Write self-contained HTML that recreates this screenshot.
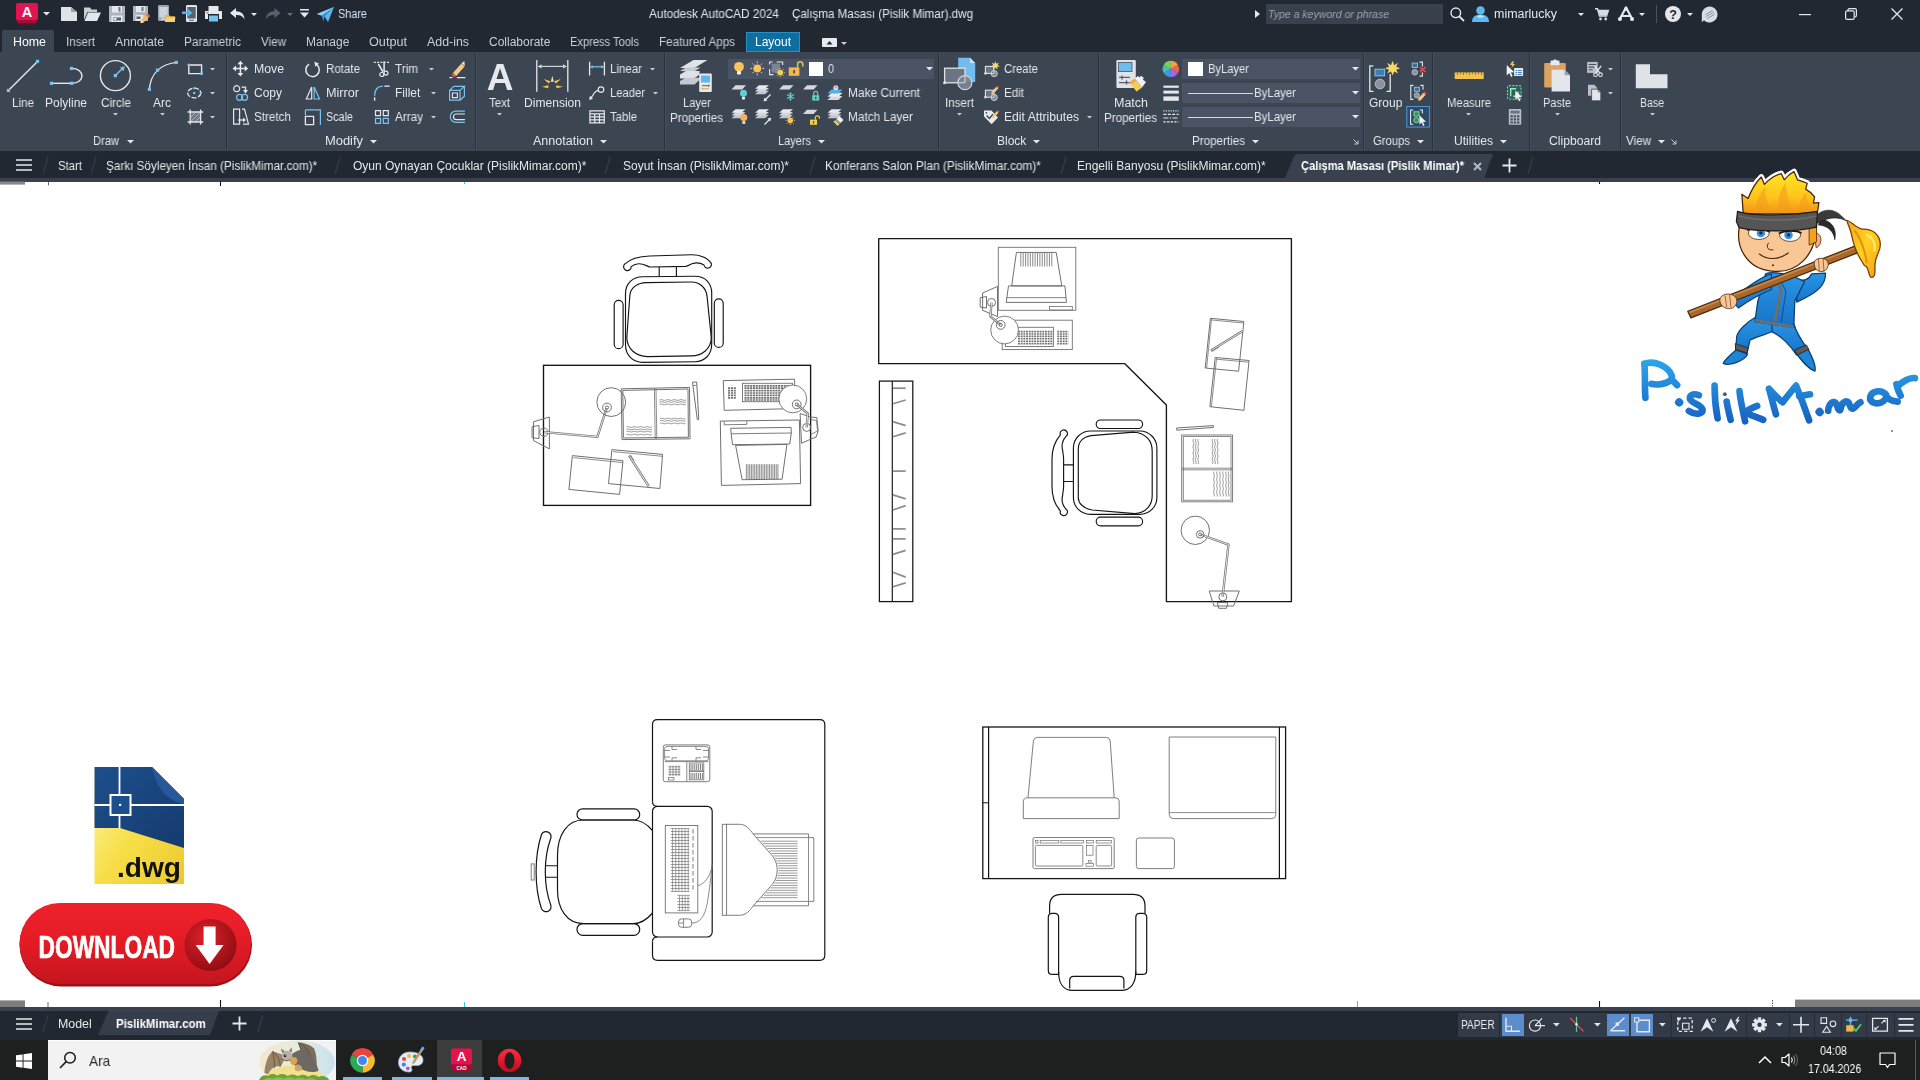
<!DOCTYPE html>
<html><head><meta charset="utf-8"><title>AutoCAD</title>
<style>
html,body{margin:0;padding:0;width:1920px;height:1080px;overflow:hidden;background:#fff;font-family:"Liberation Sans",sans-serif;}
.abs{position:absolute}
.t{position:absolute;white-space:nowrap;transform-origin:0 50%;will-change:transform;}
.i{position:absolute;overflow:visible}
</style></head><body>
<div class="abs" style="left:0;top:0;width:1920px;height:52px;background:#222832"></div>
<div class="abs" style="left:0;top:52px;width:1920px;height:99px;background:#3c4552"></div>
<div class="abs" style="left:0;top:151px;width:1920px;height:27px;background:#222832"></div>
<div class="abs" style="left:0;top:177.5px;width:1920px;height:4px;background:#39414f"></div>
<div class="abs" style="left:2px;top:30px;width:52px;height:23px;background:#3c4552;border-radius:2px 2px 0 0"></div>
<div class="abs" style="left:746px;top:32px;width:54px;height:20px;background:#0d6e9f;border:1px solid #2a8fc4;box-sizing:border-box"></div>
<span class="t" style="left:13.0px;top:34.0px;font-size:12px;line-height:16px;color:#ffffff;transform:scaleX(1.031);">Home</span>
<span class="t" style="left:66.0px;top:34.0px;font-size:12px;line-height:16px;color:#c9ced6;transform:scaleX(0.966);">Insert</span>
<span class="t" style="left:115.0px;top:34.0px;font-size:12px;line-height:16px;color:#c9ced6;transform:scaleX(1.020);">Annotate</span>
<span class="t" style="left:184.0px;top:34.0px;font-size:12px;line-height:16px;color:#c9ced6;transform:scaleX(0.983);">Parametric</span>
<span class="t" style="left:261.0px;top:34.0px;font-size:12px;line-height:16px;color:#c9ced6;transform:scaleX(0.969);">View</span>
<span class="t" style="left:306.0px;top:34.0px;font-size:12px;line-height:16px;color:#c9ced6;transform:scaleX(0.992);">Manage</span>
<span class="t" style="left:369.0px;top:34.0px;font-size:12px;line-height:16px;color:#c9ced6;transform:scaleX(1.055);">Output</span>
<span class="t" style="left:427.0px;top:34.0px;font-size:12px;line-height:16px;color:#c9ced6;transform:scaleX(1.032);">Add-ins</span>
<span class="t" style="left:489.0px;top:34.0px;font-size:12px;line-height:16px;color:#c9ced6;transform:scaleX(0.994);">Collaborate</span>
<span class="t" style="left:570.0px;top:34.0px;font-size:12px;line-height:16px;color:#c9ced6;transform:scaleX(0.926);">Express Tools</span>
<span class="t" style="left:659.0px;top:34.0px;font-size:12px;line-height:16px;color:#c9ced6;transform:scaleX(0.974);">Featured Apps</span>
<span class="t" style="left:755.0px;top:34.0px;font-size:12px;line-height:16px;color:#ffffff;">Layout</span>
<svg class="i" style="left:822px;top:38px" width="15" height="9" viewBox="0 0 15 9" ><rect x="0" y="0" width="15" height="9" rx="1" fill="#e8eaee"/><path d="M4.5 6.5L7.5 3L10.5 6.5Z" fill="#222832"/></svg>
<svg class="i" style="left:840.5px;top:41.5px" width="6" height="3" viewBox="0 0 6 3"><path d="M0 0H6L3 3Z" fill="#c9ced6"/></svg>
<span class="t" style="left:649.0px;top:6.0px;font-size:12px;line-height:16px;color:#e4e7ec;transform:scaleX(0.979);">Autodesk AutoCAD 2024</span>
<span class="t" style="left:792.0px;top:6.0px;font-size:12px;line-height:16px;color:#e4e7ec;transform:scaleX(0.966);">Çalışma Masası (Pislik Mimar).dwg</span>
<span class="t" style="left:338.0px;top:6.0px;font-size:12px;line-height:16px;color:#cfe3f5;transform:scaleX(0.906);">Share</span>
<div class="abs" style="left:1265.5px;top:4px;width:177.5px;height:20px;background:#39414f"></div>
<span class="t" style="left:1268.0px;top:6.5px;font-size:11px;line-height:15px;color:#9aa3b0;font-style:italic;transform:scaleX(0.958);">Type a keyword or phrase</span>
<span class="t" style="left:1494.0px;top:6.0px;font-size:12px;line-height:16px;color:#e4e7ec;transform:scaleX(1.038);">mimarlucky</span>
<div class="abs" style="left:1656px;top:5px;width:1px;height:18px;background:#4a5261"></div>
<div class="abs" style="left:226px;top:53px;width:1px;height:97px;background:#2b323e"></div>
<div class="abs" style="left:227px;top:53px;width:1px;height:97px;background:#464f5f"></div>
<div class="abs" style="left:475px;top:53px;width:1px;height:97px;background:#2b323e"></div>
<div class="abs" style="left:476px;top:53px;width:1px;height:97px;background:#464f5f"></div>
<div class="abs" style="left:664px;top:53px;width:1px;height:97px;background:#2b323e"></div>
<div class="abs" style="left:665px;top:53px;width:1px;height:97px;background:#464f5f"></div>
<div class="abs" style="left:938px;top:53px;width:1px;height:97px;background:#2b323e"></div>
<div class="abs" style="left:939px;top:53px;width:1px;height:97px;background:#464f5f"></div>
<div class="abs" style="left:1098px;top:53px;width:1px;height:97px;background:#2b323e"></div>
<div class="abs" style="left:1099px;top:53px;width:1px;height:97px;background:#464f5f"></div>
<div class="abs" style="left:1363px;top:53px;width:1px;height:97px;background:#2b323e"></div>
<div class="abs" style="left:1364px;top:53px;width:1px;height:97px;background:#464f5f"></div>
<div class="abs" style="left:1432px;top:53px;width:1px;height:97px;background:#2b323e"></div>
<div class="abs" style="left:1433px;top:53px;width:1px;height:97px;background:#464f5f"></div>
<div class="abs" style="left:1529px;top:53px;width:1px;height:97px;background:#2b323e"></div>
<div class="abs" style="left:1530px;top:53px;width:1px;height:97px;background:#464f5f"></div>
<div class="abs" style="left:1620px;top:53px;width:1px;height:97px;background:#2b323e"></div>
<div class="abs" style="left:1621px;top:53px;width:1px;height:97px;background:#464f5f"></div>
<span class="t" style="left:12.0px;top:95.0px;font-size:12px;line-height:16px;color:#e4e7ec;transform:scaleX(0.970);">Line</span>
<span class="t" style="left:45.0px;top:95.0px;font-size:12px;line-height:16px;color:#e4e7ec;">Polyline</span>
<span class="t" style="left:101.0px;top:95.0px;font-size:12px;line-height:16px;color:#e4e7ec;transform:scaleX(0.978);">Circle</span>
<span class="t" style="left:153.0px;top:95.0px;font-size:12px;line-height:16px;color:#e4e7ec;">Arc</span>
<span class="t" style="left:93.0px;top:133.0px;font-size:12px;line-height:16px;color:#e4e7ec;transform:scaleX(0.929);">Draw</span>
<span class="t" style="left:254.0px;top:61.0px;font-size:12px;line-height:16px;color:#e4e7ec;transform:scaleX(1.022);">Move</span>
<span class="t" style="left:254.0px;top:85.0px;font-size:12px;line-height:16px;color:#e4e7ec;">Copy</span>
<span class="t" style="left:254.0px;top:109.0px;font-size:12px;line-height:16px;color:#e4e7ec;transform:scaleX(0.973);">Stretch</span>
<span class="t" style="left:326.0px;top:61.0px;font-size:12px;line-height:16px;color:#e4e7ec;transform:scaleX(0.962);">Rotate</span>
<span class="t" style="left:326.0px;top:85.0px;font-size:12px;line-height:16px;color:#e4e7ec;transform:scaleX(1.054);">Mirror</span>
<span class="t" style="left:326.0px;top:109.0px;font-size:12px;line-height:16px;color:#e4e7ec;transform:scaleX(0.899);">Scale</span>
<span class="t" style="left:395.0px;top:61.0px;font-size:12px;line-height:16px;color:#e4e7ec;transform:scaleX(0.977);">Trim</span>
<span class="t" style="left:395.0px;top:85.0px;font-size:12px;line-height:16px;color:#e4e7ec;transform:scaleX(0.987);">Fillet</span>
<span class="t" style="left:395.0px;top:109.0px;font-size:12px;line-height:16px;color:#e4e7ec;transform:scaleX(0.977);">Array</span>
<span class="t" style="left:325.0px;top:133.0px;font-size:12px;line-height:16px;color:#e4e7ec;transform:scaleX(1.075);">Modify</span>
<span class="t" style="left:489.0px;top:95.0px;font-size:12px;line-height:16px;color:#e4e7ec;transform:scaleX(0.954);">Text</span>
<span class="t" style="left:524.0px;top:95.0px;font-size:12px;line-height:16px;color:#e4e7ec;transform:scaleX(1.006);">Dimension</span>
<span class="t" style="left:610.0px;top:61.0px;font-size:12px;line-height:16px;color:#e4e7ec;transform:scaleX(0.959);">Linear</span>
<span class="t" style="left:610.0px;top:85.0px;font-size:12px;line-height:16px;color:#e4e7ec;transform:scaleX(0.937);">Leader</span>
<span class="t" style="left:610.0px;top:109.0px;font-size:12px;line-height:16px;color:#e4e7ec;transform:scaleX(0.941);">Table</span>
<span class="t" style="left:533.0px;top:133.0px;font-size:12px;line-height:16px;color:#e4e7ec;transform:scaleX(1.046);">Annotation</span>
<span class="t" style="left:683.0px;top:95.0px;font-size:12px;line-height:16px;color:#e4e7ec;transform:scaleX(0.933);">Layer</span>
<span class="t" style="left:670.0px;top:110.0px;font-size:12px;line-height:16px;color:#e4e7ec;transform:scaleX(0.969);">Properties</span>
<span class="t" style="left:848.0px;top:85.0px;font-size:12px;line-height:16px;color:#e4e7ec;transform:scaleX(0.991);">Make Current</span>
<span class="t" style="left:848.0px;top:109.0px;font-size:12px;line-height:16px;color:#e4e7ec;transform:scaleX(0.984);">Match Layer</span>
<span class="t" style="left:778.0px;top:133.0px;font-size:12px;line-height:16px;color:#e4e7ec;transform:scaleX(0.916);">Layers</span>
<span class="t" style="left:945.0px;top:95.0px;font-size:12px;line-height:16px;color:#e4e7ec;transform:scaleX(0.966);">Insert</span>
<span class="t" style="left:1004.0px;top:61.0px;font-size:12px;line-height:16px;color:#e4e7ec;transform:scaleX(0.944);">Create</span>
<span class="t" style="left:1004.0px;top:85.0px;font-size:12px;line-height:16px;color:#e4e7ec;transform:scaleX(0.967);">Edit</span>
<span class="t" style="left:1004.0px;top:109.0px;font-size:12px;line-height:16px;color:#e4e7ec;transform:scaleX(1.013);">Edit Attributes</span>
<span class="t" style="left:997.0px;top:133.0px;font-size:12px;line-height:16px;color:#e4e7ec;transform:scaleX(0.988);">Block</span>
<span class="t" style="left:1114.0px;top:95.0px;font-size:12px;line-height:16px;color:#e4e7ec;transform:scaleX(1.041);">Match</span>
<span class="t" style="left:1104.0px;top:110.0px;font-size:12px;line-height:16px;color:#e4e7ec;transform:scaleX(0.969);">Properties</span>
<span class="t" style="left:1192.0px;top:133.0px;font-size:12px;line-height:16px;color:#e4e7ec;transform:scaleX(0.969);">Properties</span>
<span class="t" style="left:1369.0px;top:95.0px;font-size:12px;line-height:16px;color:#e4e7ec;transform:scaleX(0.990);">Group</span>
<span class="t" style="left:1373.0px;top:133.0px;font-size:12px;line-height:16px;color:#e4e7ec;transform:scaleX(0.940);">Groups</span>
<span class="t" style="left:1447.0px;top:95.0px;font-size:12px;line-height:16px;color:#e4e7ec;transform:scaleX(0.943);">Measure</span>
<span class="t" style="left:1454.0px;top:133.0px;font-size:12px;line-height:16px;color:#e4e7ec;transform:scaleX(1.008);">Utilities</span>
<span class="t" style="left:1543.0px;top:95.0px;font-size:12px;line-height:16px;color:#e4e7ec;transform:scaleX(0.913);">Paste</span>
<span class="t" style="left:1549.0px;top:133.0px;font-size:12px;line-height:16px;color:#e4e7ec;transform:scaleX(1.012);">Clipboard</span>
<span class="t" style="left:1640.0px;top:95.0px;font-size:12px;line-height:16px;color:#e4e7ec;transform:scaleX(0.877);">Base</span>
<span class="t" style="left:1626.0px;top:133.0px;font-size:12px;line-height:16px;color:#e4e7ec;transform:scaleX(0.969);">View</span>
<svg class="i" style="left:126.5px;top:139.8px" width="7.0" height="3.5" viewBox="0 0 7.0 3.5"><path d="M0 0H7.0L3.5 3.5Z" fill="#e4e7ec"/></svg>
<svg class="i" style="left:369.5px;top:139.8px" width="7.0" height="3.5" viewBox="0 0 7.0 3.5"><path d="M0 0H7.0L3.5 3.5Z" fill="#e4e7ec"/></svg>
<svg class="i" style="left:599.5px;top:139.8px" width="7.0" height="3.5" viewBox="0 0 7.0 3.5"><path d="M0 0H7.0L3.5 3.5Z" fill="#e4e7ec"/></svg>
<svg class="i" style="left:817.5px;top:139.8px" width="7.0" height="3.5" viewBox="0 0 7.0 3.5"><path d="M0 0H7.0L3.5 3.5Z" fill="#e4e7ec"/></svg>
<svg class="i" style="left:1032.5px;top:139.8px" width="7.0" height="3.5" viewBox="0 0 7.0 3.5"><path d="M0 0H7.0L3.5 3.5Z" fill="#e4e7ec"/></svg>
<svg class="i" style="left:1251.5px;top:139.8px" width="7.0" height="3.5" viewBox="0 0 7.0 3.5"><path d="M0 0H7.0L3.5 3.5Z" fill="#e4e7ec"/></svg>
<svg class="i" style="left:1416.5px;top:139.8px" width="7.0" height="3.5" viewBox="0 0 7.0 3.5"><path d="M0 0H7.0L3.5 3.5Z" fill="#e4e7ec"/></svg>
<svg class="i" style="left:1499.5px;top:139.8px" width="7.0" height="3.5" viewBox="0 0 7.0 3.5"><path d="M0 0H7.0L3.5 3.5Z" fill="#e4e7ec"/></svg>
<svg class="i" style="left:1657.5px;top:139.8px" width="7.0" height="3.5" viewBox="0 0 7.0 3.5"><path d="M0 0H7.0L3.5 3.5Z" fill="#e4e7ec"/></svg>
<svg class="i" style="left:112.5px;top:113.2px" width="5.0" height="2.5" viewBox="0 0 5.0 2.5"><path d="M0 0H5.0L2.5 2.5Z" fill="#c9ced6"/></svg>
<svg class="i" style="left:159.5px;top:113.2px" width="5.0" height="2.5" viewBox="0 0 5.0 2.5"><path d="M0 0H5.0L2.5 2.5Z" fill="#c9ced6"/></svg>
<svg class="i" style="left:496.5px;top:113.2px" width="5.0" height="2.5" viewBox="0 0 5.0 2.5"><path d="M0 0H5.0L2.5 2.5Z" fill="#c9ced6"/></svg>
<svg class="i" style="left:956.5px;top:113.2px" width="5.0" height="2.5" viewBox="0 0 5.0 2.5"><path d="M0 0H5.0L2.5 2.5Z" fill="#c9ced6"/></svg>
<svg class="i" style="left:1465.5px;top:113.2px" width="5.0" height="2.5" viewBox="0 0 5.0 2.5"><path d="M0 0H5.0L2.5 2.5Z" fill="#c9ced6"/></svg>
<svg class="i" style="left:1554.5px;top:113.2px" width="5.0" height="2.5" viewBox="0 0 5.0 2.5"><path d="M0 0H5.0L2.5 2.5Z" fill="#c9ced6"/></svg>
<svg class="i" style="left:1649.5px;top:113.2px" width="5.0" height="2.5" viewBox="0 0 5.0 2.5"><path d="M0 0H5.0L2.5 2.5Z" fill="#c9ced6"/></svg>
<svg class="i" style="left:209.5px;top:68.2px" width="5.0" height="2.5" viewBox="0 0 5.0 2.5"><path d="M0 0H5.0L2.5 2.5Z" fill="#c9ced6"/></svg>
<svg class="i" style="left:209.5px;top:92.2px" width="5.0" height="2.5" viewBox="0 0 5.0 2.5"><path d="M0 0H5.0L2.5 2.5Z" fill="#c9ced6"/></svg>
<svg class="i" style="left:209.5px;top:116.2px" width="5.0" height="2.5" viewBox="0 0 5.0 2.5"><path d="M0 0H5.0L2.5 2.5Z" fill="#c9ced6"/></svg>
<svg class="i" style="left:428.5px;top:68.2px" width="5.0" height="2.5" viewBox="0 0 5.0 2.5"><path d="M0 0H5.0L2.5 2.5Z" fill="#c9ced6"/></svg>
<svg class="i" style="left:430.5px;top:92.2px" width="5.0" height="2.5" viewBox="0 0 5.0 2.5"><path d="M0 0H5.0L2.5 2.5Z" fill="#c9ced6"/></svg>
<svg class="i" style="left:430.5px;top:116.2px" width="5.0" height="2.5" viewBox="0 0 5.0 2.5"><path d="M0 0H5.0L2.5 2.5Z" fill="#c9ced6"/></svg>
<svg class="i" style="left:649.5px;top:68.2px" width="5.0" height="2.5" viewBox="0 0 5.0 2.5"><path d="M0 0H5.0L2.5 2.5Z" fill="#c9ced6"/></svg>
<svg class="i" style="left:652.5px;top:92.2px" width="5.0" height="2.5" viewBox="0 0 5.0 2.5"><path d="M0 0H5.0L2.5 2.5Z" fill="#c9ced6"/></svg>
<svg class="i" style="left:1086.5px;top:116.2px" width="5.0" height="2.5" viewBox="0 0 5.0 2.5"><path d="M0 0H5.0L2.5 2.5Z" fill="#c9ced6"/></svg>
<svg class="i" style="left:1607.5px;top:68.2px" width="5.0" height="2.5" viewBox="0 0 5.0 2.5"><path d="M0 0H5.0L2.5 2.5Z" fill="#c9ced6"/></svg>
<svg class="i" style="left:1607.5px;top:92.2px" width="5.0" height="2.5" viewBox="0 0 5.0 2.5"><path d="M0 0H5.0L2.5 2.5Z" fill="#c9ced6"/></svg>
<svg class="i" style="left:1353px;top:139px" width="6" height="6" viewBox="0 0 6 6" ><path d="M0.5 0.5L4.5 4.5M5 1.5V5H1.5" stroke="#c9ced6" stroke-width="1" fill="none"/></svg>
<svg class="i" style="left:1671px;top:139px" width="6" height="6" viewBox="0 0 6 6" ><path d="M0.5 0.5L4.5 4.5M5 1.5V5H1.5" stroke="#c9ced6" stroke-width="1" fill="none"/></svg>
<div class="abs" style="left:728px;top:59px;width:206px;height:20px;background:#4a5364"></div>
<div class="abs" style="left:809px;top:62px;width:14px;height:14px;background:#fff"></div>
<span class="t" style="left:828.0px;top:61.0px;font-size:12px;line-height:16px;color:#e4e7ec;transform:scaleX(0.899);">0</span>
<svg class="i" style="left:925.5px;top:67.2px" width="7.0" height="3.5" viewBox="0 0 7.0 3.5"><path d="M0 0H7.0L3.5 3.5Z" fill="#e4e7ec"/></svg>
<div class="abs" style="left:1182px;top:59px;width:178px;height:20px;background:#4a5364"></div>
<svg class="i" style="left:1351.5px;top:67.2px" width="7.0" height="3.5" viewBox="0 0 7.0 3.5"><path d="M0 0H7.0L3.5 3.5Z" fill="#e4e7ec"/></svg>
<div class="abs" style="left:1182px;top:83px;width:178px;height:20px;background:#4a5364"></div>
<svg class="i" style="left:1351.5px;top:91.2px" width="7.0" height="3.5" viewBox="0 0 7.0 3.5"><path d="M0 0H7.0L3.5 3.5Z" fill="#e4e7ec"/></svg>
<div class="abs" style="left:1182px;top:107px;width:178px;height:20px;background:#4a5364"></div>
<svg class="i" style="left:1351.5px;top:115.2px" width="7.0" height="3.5" viewBox="0 0 7.0 3.5"><path d="M0 0H7.0L3.5 3.5Z" fill="#e4e7ec"/></svg>
<div class="abs" style="left:1188px;top:62px;width:15px;height:14px;background:#fff"></div>
<span class="t" style="left:1208.0px;top:61.0px;font-size:12px;line-height:16px;color:#e4e7ec;transform:scaleX(0.931);">ByLayer</span>
<div class="abs" style="left:1188px;top:93px;width:65px;height:1px;background:#d5d9e0"></div>
<span class="t" style="left:1254.0px;top:85.0px;font-size:12px;line-height:16px;color:#e4e7ec;transform:scaleX(0.954);">ByLayer</span>
<div class="abs" style="left:1188px;top:117px;width:65px;height:1px;background:#d5d9e0"></div>
<span class="t" style="left:1254.0px;top:109.0px;font-size:12px;line-height:16px;color:#e4e7ec;transform:scaleX(0.954);">ByLayer</span>
<svg class="i" style="left:1284px;top:153.5px" width="210" height="26" viewBox="0 0 210 26"><path d="M0 26L10.5 1.5Q11.2 0 13 0H209L199.5 26Z" fill="#39414f"/></svg>
<span class="t" style="left:58.0px;top:157.6px;font-size:12px;line-height:16px;color:#e4e7ec;transform:scaleX(0.947);">Start</span>
<span class="t" style="left:106.0px;top:157.6px;font-size:12px;line-height:16px;color:#e4e7ec;transform:scaleX(0.977);">Şarkı Söyleyen İnsan (PislikMimar.com)*</span>
<span class="t" style="left:353.0px;top:157.6px;font-size:12px;line-height:16px;color:#e4e7ec;">Oyun Oynayan Çocuklar (PislikMimar.com)*</span>
<span class="t" style="left:623.0px;top:157.6px;font-size:12px;line-height:16px;color:#e4e7ec;">Soyut İnsan (PislikMimar.com)*</span>
<span class="t" style="left:825.0px;top:157.6px;font-size:12px;line-height:16px;color:#e4e7ec;transform:scaleX(0.987);">Konferans Salon Plan (PislikMimar.com)*</span>
<span class="t" style="left:1077.0px;top:157.6px;font-size:12px;line-height:16px;color:#e4e7ec;">Engelli Banyosu (PislikMimar.com)*</span>
<span class="t" style="left:1301.0px;top:157.6px;font-size:12px;line-height:16px;color:#ffffff;font-weight:bold;transform:scaleX(0.929);">Çalışma Masası (Pislik Mimar)*</span>
<svg class="i" style="left:41px;top:156px" width="9" height="19" viewBox="0 0 9 19" ><path d="M7 1L2 18" stroke="#363d4a" stroke-width="1.2"/></svg>
<svg class="i" style="left:89px;top:156px" width="9" height="19" viewBox="0 0 9 19" ><path d="M7 1L2 18" stroke="#363d4a" stroke-width="1.2"/></svg>
<svg class="i" style="left:333px;top:156px" width="9" height="19" viewBox="0 0 9 19" ><path d="M7 1L2 18" stroke="#363d4a" stroke-width="1.2"/></svg>
<svg class="i" style="left:603px;top:156px" width="9" height="19" viewBox="0 0 9 19" ><path d="M7 1L2 18" stroke="#363d4a" stroke-width="1.2"/></svg>
<svg class="i" style="left:808px;top:156px" width="9" height="19" viewBox="0 0 9 19" ><path d="M7 1L2 18" stroke="#363d4a" stroke-width="1.2"/></svg>
<svg class="i" style="left:1059px;top:156px" width="9" height="19" viewBox="0 0 9 19" ><path d="M7 1L2 18" stroke="#363d4a" stroke-width="1.2"/></svg>
<svg class="i" style="left:1526px;top:156px" width="9" height="19" viewBox="0 0 9 19" ><path d="M7 1L2 18" stroke="#363d4a" stroke-width="1.2"/></svg>
<svg class="i" style="left:16px;top:159px" width="16" height="12" viewBox="0 0 16 12" ><path d="M0 1H16M0 6H16M0 11H16" stroke="#e4e7ec" stroke-width="1.6"/></svg>
<svg class="i" style="left:1472.5px;top:161.5px" width="9" height="9" viewBox="0 0 9 9" ><path d="M1 1L8 8M8 1L1 8" stroke="#b4bac4" stroke-width="2"/></svg>
<svg class="i" style="left:1502px;top:158px" width="15" height="15" viewBox="0 0 15 15" ><path d="M7.5 0.5V14.5M0.5 7.5H14.5" stroke="#e4e7ec" stroke-width="1.8"/></svg>
<svg class="i" style="left:13.6px;top:2.4px" width="25" height="24" viewBox="0 0 25 24" ><path d="M2 3.5Q2 1 4.5 1H21.5Q24 1 24 3.5V17L22 21H3.5L2 18Z" fill="#a50d36"/>
<path d="M2 3.5Q2 1 4.5 1H21.5Q24 1 24 3.5V15.5Q24 18 21.5 18H4.5Q2 18 2 15.5Z" fill="#e2134f"/>
<path d="M3.5 21H22L21 22.5H4.5Z" fill="#7c0a28"/>
<text x="13" y="15.2" font-family="Liberation Sans" font-weight="bold" font-size="14.5" fill="#fff" text-anchor="middle">A</text></svg>
<svg class="i" style="left:42.5px;top:12.2px" width="7.0" height="3.5" viewBox="0 0 7.0 3.5"><path d="M0 0H7.0L3.5 3.5Z" fill="#e6e8ec"/></svg>
<svg class="i" style="left:61px;top:7px" width="16" height="14" viewBox="0 0 16 14" ><path d="M0 0H10L16 5V14H0Z" fill="#dfe2e7"/><path d="M10 0V5H16Z" fill="#9aa1ad"/></svg>
<svg class="i" style="left:84px;top:7px" width="17" height="14" viewBox="0 0 17 14" ><path d="M0 0.5H6L7.5 2.5H13V5H3.5L0 13Z" fill="#c9cdd4"/><path d="M4 5.5H17L13 14H0.5Z" fill="#e3e6ea"/></svg>
<svg class="i" style="left:109px;top:6px" width="16" height="16" viewBox="0 0 16 16" ><path d="M0 0H16V16H0Z" fill="#aeb4be"/><rect x="3" y="0" width="10" height="6.5" fill="#e6e8ec"/><rect x="9.5" y="1" width="2" height="4.5" fill="#6b7380"/><rect x="2.5" y="9.5" width="11" height="6.5" fill="#e6e8ec"/><rect x="4" y="11.5" width="8" height="3" fill="#596170"/><rect x="4.5" y="12" width="3" height="2" fill="#e6e8ec"/></svg>
<svg class="i" style="left:133px;top:6px" width="17" height="17" viewBox="0 0 17 17" ><path d="M0 0H15V15H0Z" fill="#aeb4be"/><rect x="3" y="0" width="9" height="6" fill="#e6e8ec"/><rect x="8.5" y="1" width="2" height="4" fill="#6b7380"/><rect x="2.5" y="9" width="8" height="6" fill="#e6e8ec"/><rect x="3.5" y="10.5" width="4" height="2.5" fill="#596170"/><path d="M8 14L14.5 7.5L17 10L10.5 16.5L7.5 17Z" fill="#f0c060"/><path d="M13 9L14.5 7.5L17 10L15.5 11.5Z" fill="#e8565b"/><path d="M7.5 17L8 14L10.5 16.5Z" fill="#f7e7c8"/></svg>
<svg class="i" style="left:158px;top:5px" width="17" height="18" viewBox="0 0 17 18" ><rect x="0" y="0" width="11" height="16" rx="1.2" fill="#9aa1ad"/><rect x="1.3" y="2" width="8.4" height="10.5" fill="#cfd3da"/><rect x="3" y="13.5" width="5" height="1.2" fill="#e6e8ec"/><path d="M7 10H11L12 11.2H17V17H7Z" fill="#e9b64d"/><path d="M8.5 12.5H17.5L16.5 17H7Z" fill="#f7d276"/></svg>
<svg class="i" style="left:182px;top:5px" width="15" height="18" viewBox="0 0 15 18" ><rect x="4" y="0" width="11" height="17" rx="1.2" fill="#e3e6ea"/><rect x="5.3" y="2" width="8.4" height="11.5" fill="#58626f"/><rect x="7" y="14.7" width="5" height="1.2" fill="#6b7380"/><path d="M0 6.5H6V4L10.5 7.7L6 11.4V9H0Z" fill="#52b3ee"/></svg>
<svg class="i" style="left:205px;top:6px" width="17" height="16" viewBox="0 0 17 16" ><rect x="3.5" y="0" width="10" height="5" fill="#e6e8ec"/><path d="M0 5H17V13H0Z" fill="#e6e8ec"/><rect x="3" y="8" width="11" height="8" fill="#222832"/><rect x="4" y="9.5" width="9" height="6" fill="#74c3ee"/><rect x="1.5" y="6.3" width="2" height="1.2" fill="#596170"/></svg>
<svg class="i" style="left:230px;top:8px" width="15" height="12" viewBox="0 0 15 12" ><path d="M0 5L6 0V3.2C11 3.2 14.5 6 14.5 11.5C13 8.2 10.5 7 6 7V10Z" fill="#e6e8ec"/></svg>
<svg class="i" style="left:251.0px;top:12.5px" width="6" height="3" viewBox="0 0 6 3"><path d="M0 0H6L3 3Z" fill="#e6e8ec"/></svg>
<svg class="i" style="left:266px;top:8px" width="15" height="12" viewBox="0 0 15 12" ><path d="M14.5 5L8.5 0V3.2C3.5 3.2 0 6 0 11.5C1.5 8.2 4 7 8.5 7V10Z" fill="#596170"/></svg>
<svg class="i" style="left:287.0px;top:12.5px" width="6" height="3" viewBox="0 0 6 3"><path d="M0 0H6L3 3Z" fill="#69717f"/></svg>
<svg class="i" style="left:300px;top:9px" width="9" height="9" viewBox="0 0 9 9" ><rect x="0" y="0" width="9" height="1.5" fill="#e6e8ec"/><path d="M0 3.5H9L4.5 8.5Z" fill="#e6e8ec"/></svg>
<svg class="i" style="left:317px;top:7px" width="17" height="15" viewBox="0 0 17 15" ><path d="M0 7L17 0L11 15L7.5 9.5Z" fill="#5ab6ef"/><path d="M17 0L7.5 9.5L6.5 14.5L4.5 8.5Z" fill="#2f8fd3"/><path d="M0 7L17 0L4.5 8.5Z" fill="#8ed0f7"/></svg>
<svg class="i" style="left:1255px;top:10px" width="5" height="8" viewBox="0 0 5 8" ><path d="M0 0L5 4L0 8Z" fill="#e6e8ec"/></svg>
<svg class="i" style="left:1450px;top:7px" width="15" height="15" viewBox="0 0 15 15" ><circle cx="5.8" cy="5.8" r="4.8" stroke="#e6e8ec" stroke-width="1.4" fill="none"/><path d="M9.3 9.3L14 14" stroke="#e6e8ec" stroke-width="1.8"/></svg>
<svg class="i" style="left:1472px;top:6px" width="17" height="16" viewBox="0 0 17 16" ><circle cx="8.5" cy="4.5" r="4.3" fill="#5cb8f0"/><path d="M0 16C0 10.5 3.5 8.8 8.5 8.8S17 10.5 17 16Z" fill="#5cb8f0"/><path d="M4.5 10.2Q8.5 13.5 12.5 10.2L8.5 9Z" fill="#bfe3fa"/></svg>
<svg class="i" style="left:1578.0px;top:13.0px" width="6" height="3" viewBox="0 0 6 3"><path d="M0 0H6L3 3Z" fill="#e6e8ec"/></svg>
<svg class="i" style="left:1595px;top:8px" width="14" height="13" viewBox="0 0 14 13" ><path d="M0 0.8H2.5L4.5 8H11.5L13.3 2.5H3.2" stroke="#d9dce2" stroke-width="1.5" fill="none"/><path d="M3.6 3H13L11.4 7.6H4.8Z" fill="#d9dce2"/><circle cx="5.5" cy="11" r="1.4" fill="#d9dce2"/><circle cx="10.7" cy="11" r="1.4" fill="#d9dce2"/></svg>
<svg class="i" style="left:1618px;top:7px" width="16" height="14" viewBox="0 0 16 14" ><path d="M8 0.5L1.5 12.5M8 0.5L14.5 12.5M3.5 9H12.5" stroke="#e6e8ec" stroke-width="2.2" fill="none" stroke-linecap="round"/><circle cx="8" cy="2" r="2" fill="#e6e8ec"/><circle cx="2" cy="12" r="2" fill="#e6e8ec"/><circle cx="14" cy="12" r="2" fill="#e6e8ec"/></svg>
<svg class="i" style="left:1639.0px;top:13.0px" width="6" height="3" viewBox="0 0 6 3"><path d="M0 0H6L3 3Z" fill="#e6e8ec"/></svg>
<svg class="i" style="left:1665px;top:6px" width="16" height="16" viewBox="0 0 16 16" ><circle cx="8" cy="8" r="8" fill="#e3e6ea"/><text x="8" y="12.5" font-family="Liberation Sans" font-weight="bold" font-size="12.5" fill="#222832" text-anchor="middle">?</text></svg>
<svg class="i" style="left:1687.0px;top:13.0px" width="6" height="3" viewBox="0 0 6 3"><path d="M0 0H6L3 3Z" fill="#e6e8ec"/></svg>
<svg class="i" style="left:1701px;top:6px" width="17" height="17" viewBox="0 0 17 17" ><path d="M8.5 0.5A8 8 0 1 1 3 14.3L0.8 16.2V9A8 8 0 0 1 8.5 0.5Z" fill="#d9dce2"/><path d="M4.5 8.5L11.5 4.5M4.5 10.8L13 6M6 12.6L13.3 8.4" stroke="#8b93a0" stroke-width="1"/></svg>
<svg class="i" style="left:1799px;top:14px" width="12" height="1" viewBox="0 0 12 1" ><rect width="12" height="1.2" fill="#e6e8ec"/></svg>
<svg class="i" style="left:1845px;top:8px" width="12" height="12" viewBox="0 0 12 12" ><rect x="0.6" y="2.8" width="8.6" height="8.6" rx="1.5" stroke="#e6e8ec" stroke-width="1.2" fill="none"/><path d="M3 2.8V2Q3 0.6 4.4 0.6H10Q11.4 0.6 11.4 2V7.6Q11.4 9 10 9H9.4" stroke="#e6e8ec" stroke-width="1.2" fill="none"/></svg>
<svg class="i" style="left:1891px;top:8px" width="12" height="12" viewBox="0 0 12 12" ><path d="M0.5 0.5L11.5 11.5M11.5 0.5L0.5 11.5" stroke="#e6e8ec" stroke-width="1.3"/></svg>
<svg class="i" style="left:0;top:0" width="1920" height="181" viewBox="0 0 1920 181"><path d="M8.4 90.5L37.5 61.4" stroke="#e6e8ec" stroke-width="1.4" fill="none" /><rect x="6.8" y="88.9" width="3.2" height="3.2" fill="#7cc4f0"/><rect x="35.9" y="59.8" width="3.2" height="3.2" fill="#7cc4f0"/>
<path d="M51.5 83.3H71.5" stroke="#e6e8ec" stroke-width="1.4" fill="none" /><path d="M71.5 83.3C85.5 83.3 85.5 68.4 71.5 68.4" stroke="#e6e8ec" stroke-width="1.4" fill="none" /><rect x="49.9" y="81.7" width="3.2" height="3.2" fill="#7cc4f0"/><rect x="69.9" y="81.7" width="3.2" height="3.2" fill="#7cc4f0"/><rect x="69.9" y="66.8" width="3.2" height="3.2" fill="#7cc4f0"/>
<circle cx="115.4" cy="75.6" r="15" stroke="#e6e8ec" stroke-width="1.4" fill="none"/><path d="M115.4 75.6L123 68" stroke="#7cc4f0" stroke-width="1.4" fill="none" /><path d="M124.8 66.2L119.8 67.4L123.6 71.2Z" fill="#7cc4f0" /><rect x="113.8" y="74.0" width="3.2" height="3.2" fill="#7cc4f0"/>
<path d="M149.4 89.3C150.5 74 160 64.5 176.3 62.4" stroke="#e6e8ec" stroke-width="1.4" fill="none" /><rect x="147.8" y="87.7" width="3.2" height="3.2" fill="#7cc4f0"/><rect x="155.9" y="68.6" width="3.2" height="3.2" fill="#7cc4f0"/><rect x="174.7" y="60.8" width="3.2" height="3.2" fill="#7cc4f0"/>
<path d="M188.8 65H201.6V73.6H188.8Z" stroke="#e6e8ec" stroke-width="1.4" fill="none" /><rect x="187.5" y="63.7" width="2.6" height="2.6" fill="#7cc4f0"/><rect x="200.3" y="72.3" width="2.6" height="2.6" fill="#7cc4f0"/>
<ellipse cx="194.2" cy="93" rx="6.6" ry="4.8" stroke="#e6e8ec" stroke-width="1.3" fill="none" stroke-dasharray="5 1.6"/><rect x="193.1" y="91.9" width="2.2" height="2.2" fill="#7cc4f0"/><rect x="199.8" y="92.0" width="2" height="2" fill="#7cc4f0"/><rect x="193.2" y="87.2" width="2" height="2" fill="#7cc4f0"/>
<rect x="190.6" y="112.2" width="9.6" height="9.6" fill="#6d7887"/><path d="M191 121.5L200 112.5M191 117L195.5 112.5M195.5 121.5L200 117" stroke="#aeb5c0" stroke-width="1" fill="none" /><path d="M190.2 109.5V124.5M200.6 109.5V124.5M187.6 112H203.2M187.6 122H203.2" stroke="#e6e8ec" stroke-width="1.3" fill="none" />
<g transform="translate(240.4 68.6)"><path d="M-5 0H5M0 -5V5" stroke="#e6e8ec" stroke-width="1.5" fill="none" /><path d="M-7.8 0L-4.3 -3V3ZM7.8 0L4.3 -3V3ZM0 -7.8L-3 -4.3H3ZM0 7.8L-3 4.3H3Z" fill="#e6e8ec" /></g>
<g transform="translate(233 85)"><circle cx="3.7" cy="3.7" r="3" stroke="#e6e8ec" stroke-width="1.2" fill="none"/><circle cx="6.6" cy="12.3" r="3" stroke="#7cc4f0" stroke-width="1.2" fill="none"/><circle cx="11.6" cy="12.3" r="3" stroke="#7cc4f0" stroke-width="1.2" fill="none"/><path d="M8.5 2.2H12.5V6" stroke="#e6e8ec" stroke-width="1.3" fill="none" /><path d="M12.5 8.5L10 5H15Z" fill="#e6e8ec" /></g>
<g transform="translate(233 108.5)"><path d="M0.6 0.6H6.6V15.6H0.6Z" stroke="#e6e8ec" stroke-width="1.2" fill="none" /><path d="M9 0.6H11.5L15.5 15.6H10" stroke="#e6e8ec" stroke-width="1.2" fill="none" /><path d="M5 11.5H11" stroke="#e6e8ec" stroke-width="1.3" fill="none" /><path d="M13 11.5L10 9V14Z" fill="#e6e8ec" /></g>
<g transform="translate(312.6 70)"><path d="M4.5 -5A6.7 6.7 0 1 1 -3.5 -5.8" stroke="#e6e8ec" stroke-width="1.5" fill="none" /><path d="M6.5 -6.2L1.8 -8.6L2.6 -3.2Z" fill="#e6e8ec" /></g>
<g transform="translate(305.5 85.5)"><path d="M6.2 1.5V13.5H0.8Z" stroke="#e6e8ec" stroke-width="1.2" fill="none" /><path d="M8.6 1.5V13.5H14Z" stroke="#7cc4f0" stroke-width="1.2" fill="none" /></g>
<g transform="translate(304.8 109.3)"><path d="M0.6 0.6H15.6V15.6" stroke="#7cc4f0" stroke-width="1.2" fill="none" /><path d="M0.6 0.6V6" stroke="#7cc4f0" stroke-width="1.2" fill="none" /><path d="M0.6 7H8.8V15.4H0.6Z" stroke="#e6e8ec" stroke-width="1.3" fill="none" /></g>
<g transform="translate(373.8 61.5)"><path d="M0 0.8H16" stroke="#e6e8ec" stroke-width="1.3" fill="none" stroke-dasharray="2 1.3"/><path d="M10.3 0V9.5M4.5 2.5L9.3 10.5" stroke="#e6e8ec" stroke-width="1.5" fill="none" /><circle cx="8" cy="13" r="2" stroke="#e6e8ec" stroke-width="1.2" fill="none"/><circle cx="12.2" cy="11.6" r="2" stroke="#e6e8ec" stroke-width="1.2" fill="none"/></g>
<g transform="translate(373.8 85.3)"><path d="M0.8 15.5V12M16 0.8H10.5" stroke="#e6e8ec" stroke-width="1.4" fill="none" /><path d="M0.8 10.5C0.8 4 4 0.8 9 0.8" stroke="#7cc4f0" stroke-width="1.4" fill="none" /></g>
<g transform="translate(374.9 110)"><path d="M0.6 0.6H5.6V5.6H0.6ZM8.4 0.6H13.4V5.6H8.4Z" stroke="#e6e8ec" stroke-width="1.2" fill="none" /><path d="M0.6 8.4H5.6V13.4H0.6ZM8.4 8.4H13.4V13.4H8.4Z" stroke="#7cc4f0" stroke-width="1.2" fill="none" /></g>
<g transform="translate(449.4 61)"><path d="M3.5 12L12 2.5L15.2 5.4L6.7 15Z" fill="#f3c98b" /><path d="M12 2.5L14.8 0L15.6 4.8Z" fill="#f6e3b5" /><path d="M3.5 12L6.7 15L4.5 16.2L2.3 14.2Z" fill="#ef5350" /><path d="M0 16.6H3M7.5 16.6H16" stroke="#e6e8ec" stroke-width="1.1" fill="none" /></g>
<g transform="translate(449 85.8)"><path d="M0.6 4.6H11V14.4H0.6ZM0.6 4.6L4.8 0.6H15.4L11 4.6M15.4 0.6V10.4L11 14.4" stroke="#7cc4f0" stroke-width="1.2" fill="none" /><path d="M3.4 7.2H8.4V11.8H3.4Z" stroke="#e6e8ec" stroke-width="1.1" fill="none" /></g>
<g transform="translate(449.4 110.4)"><path d="M15.5 0.7H6.5A5.6 5.6 0 0 0 6.5 12H15.5" stroke="#7cc4f0" stroke-width="1.2" fill="none" /><path d="M15.5 3.6H6.8A2.8 2.8 0 0 0 6.8 9.2H15.5" stroke="#e6e8ec" stroke-width="1.2" fill="none" /></g>
<text x="500.2" y="89.8" font-family="Liberation Sans" font-size="37" font-weight="bold" fill="#e6e8ec" text-anchor="middle">A</text>
<path d="M536.8 60V91.8M567.8 60V91.8" stroke="#e6e8ec" stroke-width="1.3" fill="none" /><path d="M539 66.4H565.6" stroke="#cfd3da" stroke-width="1.2" fill="none" /><path d="M537.6 66.4L541.6 64.2V68.6ZM567 66.4L563 64.2V68.6Z" fill="#cfd3da" />
<g transform="translate(552.3 85.2)"><path d="M-1.5 -3.5L0 -9.5L1.5 -3.5Z" fill="#f3e9a0" /><path d="M-3.6 -1.6L-8.6 -6.2L-1.8 -4Z" fill="#f5c451" /><path d="M3.6 -1.6L8.6 -6.2L1.8 -4Z" fill="#f5c451" /><path d="M-4 0L-10.5 1.6L-4 3Z" fill="#f5c451" /><path d="M4 0L10.5 1.6L4 3Z" fill="#f5c451" /></g>
<path d="M589.6 61.8V75.6M604.4 61.8V75.6" stroke="#e6e8ec" stroke-width="1.3" fill="none" /><path d="M590.4 66.8H603.6" stroke="#7cc4f0" stroke-width="1.2" fill="none" /><path d="M590 66.8L592.8 65.2V68.4ZM604 66.8L601.2 65.2V68.4Z" fill="#7cc4f0" />
<circle cx="601" cy="89.6" r="2.8" stroke="#e6e8ec" stroke-width="1.2" fill="none"/><path d="M598.3 90.3C593.5 91 593.5 96 590.2 98.8" stroke="#e6e8ec" stroke-width="1.2" fill="none" /><path d="M589 100L590 95.8L593 98.8Z" fill="#e6e8ec" />
<path d="M589.9 110.9H604.3V122.9H589.9ZM589.9 113.9H604.3M589.9 116.9H604.3M589.9 119.9H604.3M594.7 113.9V122.9M599.5 113.9V122.9" stroke="#e6e8ec" stroke-width="1.2" fill="none" />
<path d="M693.5 60H707.5L694.5 68H680Z" fill="#dfe2e7" /><path d="M680 71L686 67.5H700.5L694.5 71.5Z" fill="#c5c9d1" /><path d="M680 74.5L686 71H699.5V74.5L694 78.5H680Z" fill="#dfe2e7" /><path d="M680 81L686 77.8H699.5V80L694.5 84.5H680Z" fill="#c5c9d1" />
<rect x="699.2" y="73.5" width="12.6" height="18.4" rx="1" fill="#e6e8ec"/><rect x="701" y="75.5" width="9" height="7" fill="#5fb7ef"/><path d="M702 85.7H709" stroke="#596170" stroke-width="1" fill="none" /><path d="M710 85.7L708 84.4V87Z" fill="#596170" /><path d="M702 88.7H709" stroke="#e8a34a" stroke-width="1" fill="none" /><path d="M701 88.7L703 87.4V90Z" fill="#e8a34a" />
<circle cx="739" cy="66.8" r="4.9" fill="#f8c55c"/><rect x="737" y="71" width="4" height="3.6" rx="0.8" fill="#f1f2f4"/>
<circle cx="757.3" cy="68.4" r="3.9" fill="#f8c55c"/><path d="M757.3 61.6V63.2M757.3 73.6V75.2M750.5 68.4H752.1M762.5 68.4H764.1M752.5 63.6L753.6 64.7M761 72.1L762.1 73.2M752.5 73.2L753.6 72.1M761 64.7L762.1 63.6" stroke="#f3e3b0" stroke-width="1" fill="none" />
<rect x="771.5" y="63.6" width="8.5" height="9" fill="#7a8494"/><path d="M769.6 64.4V62H772.6M776.6 62H782.6V65M769.6 69V74.6H773.4" stroke="#e6e8ec" stroke-width="1.1" fill="none" /><circle cx="780.3" cy="72.6" r="2.9" fill="#f1cf5b"/><path d="M780.3 68V68.9M780.3 76.3V77.2M775.7 72.6H776.6M784 72.6H784.9M777 69.3L777.7 70M783 75.2L783.6 75.9M777 75.9L777.7 75.2M783 70L783.6 69.3" stroke="#f1cf5b" stroke-width="0.9" fill="none" />
<rect x="788.8" y="67.4" width="10.6" height="8.4" fill="#f7b84e"/><rect x="793.2" y="70" width="1.8" height="3.4" fill="#4a5364"/><path d="M797.6 67.4V64.4A2.6 2.6 0 0 1 802.8 64.4V66.6" stroke="#d9c24f" stroke-width="1.6" fill="none" />
<path d="M735.5 85.2H746.0L742.0 89.4H731.5Z" fill="#d5d8de" /><circle cx="743.5" cy="93.2" r="3.5" fill="#62cfd6"/><rect x="742" y="96.8" width="3" height="2.6" rx="0.6" fill="#f1f2f4"/>
<path d="M759 90.7H769L765 94.2H755Z" fill="#c3c7cf" /><path d="M759 88.0H769L765 91.5H755Z" fill="#d5d8de" /><path d="M759 85.2H769L765 88.7H755Z" fill="#e6e8ec" /><path d="M770.5 94.5L764.5 100.5" stroke="#e6e8ec" stroke-width="1.2" fill="none" /><path d="M763.6 101.4L764.4 97.6L767.4 100.6Z" fill="#e6e8ec" />
<path d="M783 85.2H793.5L789.5 89.4H779Z" fill="#d5d8de" /><g transform="translate(790.5 96.6)"><path d="M0 -4V4M-3.5 -2L3.5 2M-3.5 2L3.5 -2" stroke="#62cfd6" stroke-width="1.2" fill="none" /><path d="M-1.2 -3.4L0 -2.2L1.2 -3.4M-1.2 3.4L0 2.2L1.2 3.4" stroke="#62cfd6" stroke-width="0.8" fill="none" /></g>
<path d="M807 85.2H817.5L813.5 89.4H803Z" fill="#d5d8de" /><rect x="812.2" y="95.2" width="7" height="5.4" fill="#5fd0c4"/><rect x="815.1" y="96.8" width="1.3" height="2.2" fill="#3b4453"/><path d="M813.7 95.2V93.4A2 2 0 0 1 817.7 93.4V95.2" stroke="#5fd0c4" stroke-width="1.2" fill="none" />
<path d="M831.5 96H842.5L838.5 100H827.5Z" fill="#d5d8de" /><path d="M831.5 92.8H842.5L838.5 96.8H827.5Z" fill="#e9ebee" /><path d="M831.5 89.4H842.5L838.5 93.60000000000001H827.5Z" fill="#55aee8" /><circle cx="835.8" cy="87.8" r="2.5" fill="#dfe2e7"/><circle cx="835.8" cy="87.3" r="1.3" fill="#b9a9b5"/>
<path d="M735.5 114.7H745.5L741.5 118.2H731.5Z" fill="#c3c7cf" /><path d="M735.5 112.0H745.5L741.5 115.5H731.5Z" fill="#d5d8de" /><path d="M735.5 109.2H745.5L741.5 112.7H731.5Z" fill="#e6e8ec" /><circle cx="743.8" cy="117.6" r="3.5" fill="#f8b15c"/><rect x="742.3" y="121.2" width="3" height="2.6" rx="0.6" fill="#f1f2f4"/>
<path d="M759 114.7H769L765 118.2H755Z" fill="#c3c7cf" /><path d="M759 112.0H769L765 115.5H755Z" fill="#d5d8de" /><path d="M759 109.2H769L765 112.7H755Z" fill="#e6e8ec" /><path d="M764.5 124.5L770 119" stroke="#e6e8ec" stroke-width="1.2" fill="none" /><path d="M771.2 117.8L770.4 121.6L767.4 118.6Z" fill="#e6e8ec" />
<path d="M783 114.7H793L789 118.2H779Z" fill="#c3c7cf" /><path d="M783 112.0H793L789 115.5H779Z" fill="#d5d8de" /><path d="M783 109.2H793L789 112.7H779Z" fill="#e6e8ec" /><circle cx="790.3" cy="120.4" r="2.8" fill="#f8c55c"/><path d="M790.3 115.8V116.7M790.3 124.1V125M785.7 120.4H786.6M794 120.4H794.9M787 117.1L787.7 117.8M793 123L793.6 123.7M787 123.7L787.7 123M793 117.8L793.6 117.1" stroke="#f3dc8e" stroke-width="0.9" fill="none" />
<path d="M807 109.8H817.5L813.5 114.0H803Z" fill="#d5d8de" /><rect x="810" y="119.6" width="7" height="5.2" fill="#f1cf45"/><rect x="812.9" y="121.2" width="1.3" height="2.2" fill="#3b4453"/><path d="M815.4 119.6V117.8A2 2 0 0 1 819.4 117.8V118.8" stroke="#f1cf45" stroke-width="1.2" fill="none" />
<path d="M831.5 114.7H841.5L837.5 118.2H827.5Z" fill="#c3c7cf" /><path d="M831.5 112.0H841.5L837.5 115.5H827.5Z" fill="#d5d8de" /><path d="M831.5 109.2H841.5L837.5 112.7H827.5Z" fill="#e6e8ec" /><path d="M836.5 119L839.5 116L843.5 120L840.5 123Z" fill="#f1f2f4" /><path d="M835.2 120.2L836.5 119L840.5 123L839.3 124.2Z" fill="#8f98a6" /><path d="M833.3 121.5L835.2 120.2L839.3 124.2L837.6 126Z" fill="#f3cf5a" />
<path d="M958.2 57.8H970L975.2 63V82H958.2Z" fill="#72bdee" /><path d="M970 57.8V63H975.2Z" fill="#c5e4f8" /><rect x="944.6" y="68.2" width="20.4" height="14.6" fill="#6a7484" stroke="#dfe2e7" stroke-width="1.3"/><circle cx="964.9" cy="82.7" r="7" fill="#7c8594" fill-opacity="0.9" stroke="#cfd3da" stroke-width="1.2"/><path d="M964.9 75.7V82.7H957.9" stroke="#cfd3da" stroke-width="1" fill="none" /><rect x="943.3" y="81.5" width="2.6" height="2.6" fill="#dfe2e7"/>
<g transform="translate(983.6 61.8)"><rect x="1.8" y="4.6" width="8.4" height="7" fill="#6a7484" stroke="#dfe2e7" stroke-width="1.1"/><circle cx="10.6" cy="11.8" r="3.1" fill="#7c8594" stroke="#cfd3da" stroke-width="1"/><path d="M10.6 8.7V11.8H7.5" stroke="#cfd3da" stroke-width="0.9" fill="none" /><rect x="0.7" y="10.5" width="2.2" height="2.2" fill="#dfe2e7"/><g transform="translate(11.8 3.6)"><path d="M0 -4.2L1 -1.6L3.6 -2.6L2.2 -0.3L4.4 1L1.8 1.4L2 4L0 2.2L-2 4L-1.8 1.4L-4.4 1L-2.2 -0.3L-3.6 -2.6L-1 -1.6Z" fill="#f8d866" /></g></g>
<g transform="translate(983.6 85.6)"><rect x="1.8" y="4.6" width="8.4" height="7" fill="#6a7484" stroke="#dfe2e7" stroke-width="1.1"/><circle cx="10.6" cy="11.8" r="3.1" fill="#7c8594" stroke="#cfd3da" stroke-width="1"/><path d="M10.6 8.7V11.8H7.5" stroke="#cfd3da" stroke-width="0.9" fill="none" /><rect x="0.7" y="10.5" width="2.2" height="2.2" fill="#dfe2e7"/><path d="M8 6.4L12.6 1.2L14.6 3L10 8.2L7.6 8.8Z" fill="#f3c98b" /><path d="M12.6 1.2L13.6 0.1L15.6 1.9L14.6 3Z" fill="#ef5350" /></g>
<g transform="translate(983.4 109.6)"><path d="M0.6 1H8L14.6 8L8.2 14.6L0.6 7Z" fill="#e9ebee" /><path d="M3.2 5.8L6 8.8L9.6 4.6" stroke="#3b4453" stroke-width="1.4" fill="none" /><circle cx="3" cy="3.2" r="0.9" fill="#3b4453"/><path d="M9 6.4L13.2 1.6L15 3.2L10.8 8L8.6 8.6Z" fill="#f3c98b" /><path d="M13.2 1.6L14.2 0.4L16 2L15 3.2Z" fill="#ef5350" /></g>
<rect x="1116.4" y="59.9" width="19.4" height="28" rx="1" fill="#dfe2e7"/><rect x="1118.6" y="62.4" width="13.4" height="9.2" fill="#6cbcf0" stroke="#4a5364" stroke-width="0.8"/><path d="M1119 77.4H1130M1119 82.6H1130" stroke="#596170" stroke-width="1.1" fill="none" /><path d="M1122 75.4V79.4M1126.5 80.6V84.6" stroke="#596170" stroke-width="1.4" fill="none" />
<g transform="translate(1129.4 78)"><path d="M0 4.5L5.5 0.5L12.6 9.5L7.2 13.6Z" fill="#f3cf5a" /><path d="M0 4.5L5.5 0.5L7 2.4L1.5 6.5Z" fill="#f0a246" /><path d="M5.5 0.5L8.5 -2L10.2 -0.6L11.5 -2.2L14.6 0L13.4 1.6L16.6 4L12.6 9.5Z" fill="#f1f2f4" /></g>
<path d="M1170.8 69L1170.80 60.80A8.2 8.2 0 0 1 1177.90 64.90Z" fill="#f5a03c" />
<path d="M1170.8 69L1177.90 64.90A8.2 8.2 0 0 1 1177.90 73.10Z" fill="#f4604d" />
<path d="M1170.8 69L1177.90 73.10A8.2 8.2 0 0 1 1170.80 77.20Z" fill="#a368e8" />
<path d="M1170.8 69L1170.80 77.20A8.2 8.2 0 0 1 1163.70 73.10Z" fill="#4a8ef0" />
<path d="M1170.8 69L1163.70 73.10A8.2 8.2 0 0 1 1163.70 64.90Z" fill="#3fc4b0" />
<path d="M1170.8 69L1163.70 64.90A8.2 8.2 0 0 1 1170.80 60.80Z" fill="#7ed05a" />
<rect x="1163.4" y="85.6" width="15.4" height="2.2" fill="#e6e8ec"/><rect x="1163.4" y="90.6" width="15.4" height="3" fill="#e6e8ec"/><rect x="1163.4" y="96.4" width="15.4" height="4.4" fill="#e6e8ec"/>
<path d="M1163.4 110.8H1178.6" stroke="#e6e8ec" stroke-width="1.2" fill="none" stroke-dasharray="1.2 1.2"/><path d="M1163.4 114.4H1178.6" stroke="#e6e8ec" stroke-width="1.2" fill="none" stroke-dasharray="3 1.4"/><path d="M1163.4 118H1178.6" stroke="#e6e8ec" stroke-width="1.2" fill="none" stroke-dasharray="5 1.4 1.4 1.4"/><path d="M1163.4 121.8H1178.6" stroke="#e6e8ec" stroke-width="1.2" fill="none" stroke-dasharray="2.4 1.2"/>
<path d="M1373.4 65.8H1369.8V91.4H1373.4M1386.6 91.4H1390.2V74" stroke="#e6e8ec" stroke-width="1.3" fill="none" /><rect x="1375" y="69.2" width="9.6" height="6.6" fill="#3d7fb5" stroke="#7cc4f0" stroke-width="1"/><circle cx="1380" cy="84" r="4.8" fill="#8a929f" stroke="#b9bec8" stroke-width="1"/>
<g transform="translate(1392.6 68.2)"><path d="M0 -7.4L1.6 -3L5.4 -5.4L3.6 -1.4L7.6 0L3.6 1.6L5.4 5.4L1.6 3.2L0 7.4L-1.6 3.2L-5.4 5.4L-3.6 1.6L-7.6 0L-3.6 -1.4L-5.4 -5.4L-1.6 -3Z" fill="#f8d866" /></g>
<g transform="translate(1410 61.5)"><rect x="2.2" y="1.6" width="5.4" height="4.4" fill="#3d6f99" stroke="#8fc6ea" stroke-width="0.9"/><circle cx="4.8" cy="10.8" r="2.8" fill="#8a929f" stroke="#b9bec8" stroke-width="0.9"/><path d="M9.6 0.6H12.4V5M12.4 11V14.6H9.6" stroke="#e6e8ec" stroke-width="1.1" fill="none" /><path d="M10 5.6L15.4 10.4M15.4 5.6L10 10.4" stroke="#ef4a5a" stroke-width="1.6" fill="none" /></g>
<g transform="translate(1410 84.8)"><rect x="4.4" y="2.4" width="5" height="4.2" fill="#3d6f99" stroke="#8fc6ea" stroke-width="0.9"/><circle cx="6.8" cy="10.6" r="2.6" fill="#8a929f" stroke="#b9bec8" stroke-width="0.9"/><path d="M3.4 0.6H0.8V14.6H3.4M10.4 0.6H13V5" stroke="#e6e8ec" stroke-width="1.1" fill="none" /><path d="M8.6 13.4L13.4 8L15.6 10L10.8 15.4L8 16Z" fill="#f3c98b" /><path d="M13.4 8L14.4 6.8L16.6 8.8L15.6 10Z" fill="#ef5350" /></g>
<rect x="1406.8" y="106.5" width="22.6" height="20.6" fill="#2d4a68" stroke="#4b9ad6" stroke-width="1"/>
<g transform="translate(1410 109.6)"><rect x="4" y="2.2" width="5" height="4.2" fill="#3a8a5a" stroke="#8fe0a8" stroke-width="0.9"/><circle cx="6.4" cy="10.6" r="2.6" fill="#3a8a5a" stroke="#8fe0a8" stroke-width="0.9"/><path d="M3.2 0.4H0.6V14.6H3.2M9.8 0.4H12.4V4" stroke="#e6e8ec" stroke-width="1.1" fill="none" /><path d="M9.4 5.6V15L11.6 13L13.2 16.4L14.6 15.7L13 12.4L16 12.2Z" fill="#f1f2f4" /></g>
<rect x="1454.7" y="72.4" width="29" height="6.6" fill="#f3c24f"/><path d="M1457.5 72.4V75M1460.5 72.4V74.2M1463.5 72.4V75M1466.5 72.4V74.2M1469.5 72.4V75M1472.5 72.4V74.2M1475.5 72.4V75M1478.5 72.4V74.2M1481.5 72.4V75" stroke="#8a6a25" stroke-width="0.9" fill="none" />
<g transform="translate(1506.7 61.5)"><path d="M0 3.6V14L2.6 11.6L4.4 15.4L6 14.6L4.2 11L7.6 10.8Z" fill="#f1f2f4" /><path d="M5.4 0L3.4 3.4H5.6L4.8 6.2L8.4 2.4H6.2L7.4 0Z" fill="#f8c55c" /><rect x="7.4" y="6.6" width="9" height="8" rx="0.6" fill="#e6e8ec"/><path d="M9 9H10.4M11.4 9H15M9 11H10.4M11.4 11H15M9 13H10.4M11.4 13H15" stroke="#3d7fb5" stroke-width="1" fill="none" /></g>
<g transform="translate(1506.7 84.8)"><rect x="0.8" y="0.8" width="13.6" height="13.6" rx="1.4" fill="#2f5f52" stroke="#69d6ab" stroke-width="1.1" stroke-dasharray="2 1.4"/><path d="M4 11.4V4H9.4M6.6 11.4H11.4V6.6" stroke="#9be8c8" stroke-width="1.4" fill="none" /><path d="M8.6 5.6V15L10.8 13L12.4 16.4L13.8 15.7L12.2 12.4L15.2 12.2Z" fill="#f1f2f4" /></g>
<g transform="translate(1508.8 109)"><rect x="0" y="0" width="12.4" height="15.8" rx="0.8" fill="#b9bec8"/><rect x="1.6" y="1.6" width="9.2" height="3" fill="#6a7484"/><rect x="1.6" y="6.2" width="2.4" height="2.2" fill="#4a5364"/><rect x="1.6" y="9.3" width="2.4" height="2.2" fill="#4a5364"/><rect x="1.6" y="12.4" width="2.4" height="2.2" fill="#4a5364"/><rect x="4.9" y="6.2" width="2.4" height="2.2" fill="#4a5364"/><rect x="4.9" y="9.3" width="2.4" height="2.2" fill="#4a5364"/><rect x="4.9" y="12.4" width="2.4" height="2.2" fill="#4a5364"/><rect x="8.2" y="6.2" width="2.4" height="2.2" fill="#4a5364"/><rect x="8.2" y="9.3" width="2.4" height="2.2" fill="#4a5364"/><rect x="8.2" y="12.4" width="2.4" height="2.2" fill="#4a5364"/></g>
<rect x="1544.2" y="63" width="21.6" height="24.4" rx="1" fill="#dca25f"/><rect x="1550.5" y="60.6" width="9" height="4.6" rx="1" fill="#e9ebee"/><rect x="1553.4" y="59.6" width="3.2" height="2.4" rx="1" fill="#e9ebee"/><path d="M1551.6 69.8H1564.6L1570 75.2V91.6H1551.6Z" fill="#e3e6ea" /><path d="M1564.6 69.8V75.2H1570Z" fill="#9aa1ad" />
<g transform="translate(1586.7 61.5)"><rect x="0.4" y="0.4" width="10.6" height="11" fill="#b9bec8"/><path d="M2 3H9.4M2 5.6H8M2 8.2H6" stroke="#4a5364" stroke-width="1.1" fill="none" /><path d="M8 4.4L13 11.4M14.4 4.4L9.4 11.4" stroke="#e6e8ec" stroke-width="1.3" fill="none" /><circle cx="8.8" cy="13.2" r="1.8" stroke="#e6e8ec" stroke-width="1.1" fill="none"/><circle cx="13.8" cy="13.2" r="1.8" stroke="#e6e8ec" stroke-width="1.1" fill="none"/></g>
<g transform="translate(1588 84.8)"><path d="M0 0H6.4L9 2.6V11H0Z" fill="#b9bec8" /><path d="M3.6 4.4H9.6L12.8 7.6V16H3.6Z" fill="#e3e6ea" stroke="#3b4453" stroke-width="0.8"/><path d="M9.6 4.4V7.6H12.8Z" fill="#8b93a0" /></g>
<path d="M1635.8 64.3H1650V74.2H1667.5V88.2H1635.8Z" fill="#dfe2e7" /></svg>
<svg class="i" style="left:0;top:0" width="1920" height="1080" viewBox="0 0 1920 1080" fill="none"><rect x="0" y="181.6" width="25" height="3" fill="#8a8a8a"/><rect x="0" y="1000.4" width="25" height="6.6" fill="#7d7d7d"/><rect x="1795" y="999.6" width="125" height="7.6" fill="#7d7d7d"/><path d="M48.5 182V185.5M48 1002V1007" stroke="#444" stroke-width="0.8" fill="none" /><path d="M220.5 182V186M220.5 1000V1007M1599.5 182V184M1599.5 1001V1007" stroke="#111" stroke-width="1.1" fill="none" /><path d="M464.5 182V184M464.5 1002V1007M1357.5 1001V1007" stroke="#38c6d8" stroke-width="1" fill="none" /><path d="M1772.5 1000V1007" stroke="#333" stroke-width="0.8" fill="none" stroke-dasharray="1.5 1"/><path d="M631.2 266.6A3.8 3.8 0 1 1 624.6 264.2C630 259 640 256.2 649.8 256L691.4 254.8C700 254.6 708 258 711.4 263.6A3.6 3.6 0 1 1 704 265C700 262.5 696 262.5 692.6 263.5C690 264.5 688 266.2 685.6 266.4L649.8 267C646 265.6 642 263.2 638.2 263.8C635 264.2 633 265.2 631.2 266.6Z" stroke="#151515" stroke-width="1.15" fill="none" /><path d="M659.2 267V276.4M676.4 266.6V276.3" stroke="#151515" stroke-width="1.15" fill="none" /><path d="M642.8 276.7L695 276.2C705.5 276.2 711.7 283.5 711.7 293L711.7 344C711.7 354.5 705 361.6 695 361.8L642.8 362.4C632.5 362.4 625.5 355 625.5 344.8L625.5 293.8C625.5 283.5 632.5 276.8 642.8 276.7Z" stroke="#151515" stroke-width="1.15" fill="none" /><path d="M646.3 282.6L691.4 282C700 282 706 288 707 295.9L711.3 337.6C711.3 349 702 355.8 691.4 355.8L647.4 356.6C636 356.4 627 349 626.8 337.6L629.9 294.8C631 287 638 282.8 646.3 282.6Z" stroke="#151515" stroke-width="1.15" fill="none" /><rect x="614.2" y="300.3" width="8.9" height="48.3" rx="4.45" stroke="#151515" stroke-width="1.15" fill="none" /><rect x="714.3" y="298.8" width="8.9" height="48.6" rx="4.45" stroke="#151515" stroke-width="1.15" fill="none" /><rect x="543.5" y="365.3" width="267.1" height="140.1" rx="0" stroke="#151515" stroke-width="1.35" fill="none" /><path d="M533.5 421.8L549.4 417.0L549.4 448.9L533.5 440.6Z" stroke="#707070" stroke-width="1.0" fill="none" /><path d="M532.1 426.7L539.0 425.5L539.0 438.5L532.1 437.8Z" stroke="#707070" stroke-width="1.0" fill="none" /><circle cx="543.9" cy="432.2" r="4.2" stroke="#707070" stroke-width="1.0" fill="none"/><path d="M606.6 408.2L597.4 436.8L544.2 432.2" stroke="#707070" stroke-width="2.3" fill="none" stroke-linejoin="round"/><path d="M606.6 408.2L597.4 436.8L544.2 432.2" stroke="#fff" stroke-width="0.7999999999999998" fill="none" stroke-linejoin="round"/><circle cx="611.25" cy="402.1" r="14.4" stroke="#707070" stroke-width="1.0" fill="none"/><circle cx="607" cy="407.5" r="4.4" stroke="#707070" stroke-width="1.0" fill="none"/><circle cx="607" cy="407.5" r="1.6" stroke="#707070" stroke-width="1.0" fill="none"/><path d="M621.2 388.8L689.5 387.4L690.0 438.8L622.0 439.6Z" stroke="#707070" stroke-width="1.0" fill="none" /><path d="M622.8 390.4L688.0 389.0L688.4 437.2L623.4 438.0Z" stroke="#707070" stroke-width="1.0" fill="none" /><path d="M654.4 388.4L655.2 439M656 388.4L656.8 439" stroke="#707070" stroke-width="0.8" fill="none" /><path d="M659.5 400.0Q661.2 399.1 662.8 400.0Q664.5 400.9 666.1 400.0Q667.8 399.1 669.4 400.0Q671.1 400.9 672.8 400.0Q674.4 399.1 676.1 400.0Q677.7 400.9 679.4 400.0Q681.0 399.1 682.7 400.0Q684.3 400.9 686.0 400.0" stroke="#707070" stroke-width="0.7" fill="none" /><path d="M659.5 402.0Q661.2 401.1 662.8 402.0Q664.5 402.9 666.1 402.0Q667.8 401.1 669.4 402.0Q671.1 402.9 672.8 402.0Q674.4 401.1 676.1 402.0Q677.7 402.9 679.4 402.0Q681.0 401.1 682.7 402.0Q684.3 402.9 686.0 402.0" stroke="#707070" stroke-width="0.7" fill="none" /><path d="M659.5 404.4Q661.2 403.5 662.8 404.4Q664.5 405.3 666.1 404.4Q667.8 403.5 669.4 404.4Q671.1 405.3 672.8 404.4Q674.4 403.5 676.1 404.4Q677.7 405.3 679.4 404.4Q681.0 403.5 682.7 404.4Q684.3 405.3 686.0 404.4" stroke="#707070" stroke-width="0.7" fill="none" /><path d="M660.0 418.6Q661.6 417.7 663.2 418.6Q664.8 419.5 666.4 418.6Q668.0 417.7 669.6 418.6Q671.2 419.5 672.8 418.6Q674.3 417.7 675.9 418.6Q677.5 419.5 679.1 418.6Q680.7 417.7 682.3 418.6Q683.9 419.5 685.5 418.6" stroke="#707070" stroke-width="0.7" fill="none" /><path d="M660.0 420.8Q661.6 419.9 663.2 420.8Q664.8 421.7 666.4 420.8Q668.0 419.9 669.6 420.8Q671.2 421.7 672.8 420.8Q674.3 419.9 675.9 420.8Q677.5 421.7 679.1 420.8Q680.7 419.9 682.3 420.8Q683.9 421.7 685.5 420.8" stroke="#707070" stroke-width="0.7" fill="none" /><path d="M660.0 423.4Q661.6 422.5 663.2 423.4Q664.8 424.3 666.4 423.4Q668.0 422.5 669.6 423.4Q671.2 424.3 672.8 423.4Q674.3 422.5 675.9 423.4Q677.5 424.3 679.1 423.4Q680.7 422.5 682.3 423.4Q683.9 424.3 685.5 423.4" stroke="#707070" stroke-width="0.7" fill="none" /><path d="M626.5 427.0Q628.1 426.1 629.7 427.0Q631.3 427.9 632.9 427.0Q634.5 426.1 636.1 427.0Q637.7 427.9 639.2 427.0Q640.8 426.1 642.4 427.0Q644.0 427.9 645.6 427.0Q647.2 426.1 648.8 427.0Q650.4 427.9 652.0 427.0" stroke="#707070" stroke-width="0.7" fill="none" /><path d="M626.5 429.4Q628.1 428.5 629.7 429.4Q631.3 430.3 632.9 429.4Q634.5 428.5 636.1 429.4Q637.7 430.3 639.2 429.4Q640.8 428.5 642.4 429.4Q644.0 430.3 645.6 429.4Q647.2 428.5 648.8 429.4Q650.4 430.3 652.0 429.4" stroke="#707070" stroke-width="0.7" fill="none" /><path d="M626.5 431.6Q628.1 430.7 629.7 431.6Q631.3 432.5 632.9 431.6Q634.5 430.7 636.1 431.6Q637.7 432.5 639.2 431.6Q640.8 430.7 642.4 431.6Q644.0 432.5 645.6 431.6Q647.2 430.7 648.8 431.6Q650.4 432.5 652.0 431.6" stroke="#707070" stroke-width="0.7" fill="none" /><path d="M626.5 434.6Q628.1 433.7 629.7 434.6Q631.3 435.5 632.9 434.6Q634.5 433.7 636.1 434.6Q637.7 435.5 639.2 434.6Q640.8 433.7 642.4 434.6Q644.0 435.5 645.6 434.6Q647.2 433.7 648.8 434.6Q650.4 435.5 652.0 434.6" stroke="#707070" stroke-width="0.7" fill="none" /><path d="M692.5 382.2L696.7 382.0L698.8 419.7L697.3 419.7Z" stroke="#707070" stroke-width="1.0" fill="none" /><path d="M692.9 385.5L696.9 385.3" stroke="#707070" stroke-width="0.8" fill="none" /><path d="M611.9 449.6L662.6 454.4L659.9 488.5L608.5 483.6Z" stroke="#707070" stroke-width="1.0" fill="none" /><path d="M613.0 451.6L662.4 456.3" stroke="#707070" stroke-width="0.8" fill="none" /><path d="M572.4 455.6L623.0 460.7L619.6 494.4L568.9 489.4Z" stroke="#707070" stroke-width="1.0" fill="none" /><path d="M573.6 457.6L622.8 462.6" stroke="#707070" stroke-width="0.8" fill="none" /><path d="M629.3 455.8L648.8 486.4" stroke="#707070" stroke-width="2.4" fill="none" stroke-linejoin="round"/><path d="M629.3 455.8L648.8 486.4" stroke="#fff" stroke-width="0.8999999999999999" fill="none" stroke-linejoin="round"/><path d="M628.6 456.6L630.6 455.2L634 460.4" stroke="#707070" stroke-width="0.8" fill="none" /><path d="M723.3 380.6L794.6 379.2L795.0 408.6L724.2 410.3Z" stroke="#707070" stroke-width="1.0" fill="none" /><rect x="742.5" y="383.3" width="50.0" height="18.4" rx="0" stroke="#707070" stroke-width="0.9" fill="none" /><path d="M744.5 385.8H791" stroke="#707070" stroke-width="1.7" fill="none" stroke-dasharray="2.1 0.7"/><path d="M744.5 388.2H791" stroke="#707070" stroke-width="1.7" fill="none" stroke-dasharray="2.1 0.7"/><path d="M728 388.2H735.8" stroke="#707070" stroke-width="1.7" fill="none" stroke-dasharray="2.1 0.8"/><path d="M744.5 390.6H791" stroke="#707070" stroke-width="1.7" fill="none" stroke-dasharray="2.1 0.7"/><path d="M728 390.6H735.8" stroke="#707070" stroke-width="1.7" fill="none" stroke-dasharray="2.1 0.8"/><path d="M744.5 393H791" stroke="#707070" stroke-width="1.7" fill="none" stroke-dasharray="2.1 0.7"/><path d="M728 393H735.8" stroke="#707070" stroke-width="1.7" fill="none" stroke-dasharray="2.1 0.8"/><path d="M744.5 395.4H791" stroke="#707070" stroke-width="1.7" fill="none" stroke-dasharray="2.1 0.7"/><path d="M728 395.4H735.8" stroke="#707070" stroke-width="1.7" fill="none" stroke-dasharray="2.1 0.8"/><path d="M744.5 397.8H791" stroke="#707070" stroke-width="1.7" fill="none" stroke-dasharray="2.1 0.7"/><path d="M728 397.8H735.8" stroke="#707070" stroke-width="1.7" fill="none" stroke-dasharray="2.1 0.8"/><path d="M744.5 400H791" stroke="#707070" stroke-width="1.7" fill="none" stroke-dasharray="2.1 0.7"/><path d="M800.1 413.5L810.6 417.0L816.8 417.6L818.2 430.8L816.1 437.1L810.6 439.2L801.5 443.3Z" stroke="#707070" stroke-width="1.0" fill="none" /><path d="M810.6 419.5L816.5 420.5L817.5 431.0L810.6 434.5" stroke="#707070" stroke-width="0.8" fill="none" /><circle cx="806.7" cy="427.4" r="4" stroke="#707070" stroke-width="1.0" fill="none"/><circle cx="792.8" cy="398.9" r="13.9" stroke="#707070" stroke-width="0.9" fill="#fff"/><path d="M796.9 404.6L807.8 413.5L806.7 427.4" stroke="#707070" stroke-width="2.3" fill="none" stroke-linejoin="round"/><path d="M796.9 404.6L807.8 413.5L806.7 427.4" stroke="#fff" stroke-width="0.7999999999999998" fill="none" stroke-linejoin="round"/><circle cx="796.7" cy="404.4" r="4.4" stroke="#707070" stroke-width="1.0" fill="none"/><circle cx="796.7" cy="404.4" r="1.6" stroke="#707070" stroke-width="1.0" fill="none"/><path d="M720.3 421.1L799.4 420.0L800.6 483.6L721.4 485.4Z" stroke="#707070" stroke-width="1.0" fill="none" /><path d="M724.2 421.4V424.8L746.8 424.4V421" stroke="#707070" stroke-width="0.9" fill="none" /><path d="M730.7 428.3L791.1 427.4L791.3 433.0L789.7 444.0L732.5 444.7L731.2 433.8Z" stroke="#707070" stroke-width="1.0" fill="none" /><path d="M731.2 433.8L791.3 433" stroke="#707070" stroke-width="0.9" fill="none" /><path d="M735.6 445.4L786.9 444.4L782.1 479.2L742.1 479.7Z" stroke="#707070" stroke-width="1.0" fill="none" /><path d="M746.40 464.2V479.4M748.06 464.2V479.4M749.72 464.2V479.4M751.37 464.2V479.4M753.03 464.2V479.4M754.69 464.2V479.4M756.35 464.2V479.4M758.01 464.2V479.4M759.66 464.2V479.4M761.32 464.2V479.4M762.98 464.2V479.4M764.64 464.2V479.4M766.29 464.2V479.4M767.95 464.2V479.4M769.61 464.2V479.4M771.27 464.2V479.4M772.93 464.2V479.4M774.58 464.2V479.4M776.24 464.2V479.4M777.90 464.2V479.4" stroke="#707070" stroke-width="0.8" fill="none" /><path d="M878.7 238.6H1291.4V601.6H1166.4V405L1124.6 363.6H878.7Z" stroke="#151515" stroke-width="1.35" fill="none" stroke-linejoin="round"/><rect x="879.4" y="381.1" width="33.4" height="220.5" rx="0" stroke="#151515" stroke-width="1.25" fill="none" /><path d="M892.3 381.1V601.6" stroke="#151515" stroke-width="1.15" fill="none" /><path d="M892.9 388.2L905.7 388.2" stroke="#8c8c8c" stroke-width="1.7" fill="none" /><path d="M892.9 403.8L905.7 400" stroke="#8c8c8c" stroke-width="1.7" fill="none" /><path d="M892.9 421.6L905.7 425.6" stroke="#8c8c8c" stroke-width="1.7" fill="none" /><path d="M892.9 436.7L905.7 432.9" stroke="#8c8c8c" stroke-width="1.7" fill="none" /><path d="M892.9 471.1L905.7 471.1" stroke="#8c8c8c" stroke-width="1.7" fill="none" /><path d="M892.9 494.9L905.7 498.9" stroke="#8c8c8c" stroke-width="1.7" fill="none" /><path d="M892.9 510L905.7 505.6" stroke="#8c8c8c" stroke-width="1.7" fill="none" /><path d="M892.9 528.9L905.7 528.9" stroke="#8c8c8c" stroke-width="1.7" fill="none" /><path d="M892.9 538.9L905.7 538.9" stroke="#8c8c8c" stroke-width="1.7" fill="none" /><path d="M892.9 554.4L905.7 550.4" stroke="#8c8c8c" stroke-width="1.7" fill="none" /><path d="M892.9 572.2L905.7 577.1" stroke="#8c8c8c" stroke-width="1.7" fill="none" /><path d="M892.9 586.7L905.7 582.9" stroke="#8c8c8c" stroke-width="1.7" fill="none" /><rect x="998.3" y="247.3" width="77.5" height="63.0" rx="0" stroke="#707070" stroke-width="0.9" fill="none" /><path d="M1016.4 252.4L1056.2 252.4L1061.8 285.9L1011.7 285.9Z" stroke="#707070" stroke-width="1.0" fill="none" /><path d="M1008.5 285.9L1064.9 285.9L1066.5 302.4L1006.2 302.4Z" stroke="#707070" stroke-width="1.0" fill="none" /><path d="M1006.6 297.7H1066" stroke="#707070" stroke-width="0.9" fill="none" /><path d="M1020.80 252.8V266.5M1023.18 252.8V266.5M1025.57 252.8V266.5M1027.95 252.8V266.5M1030.34 252.8V266.5M1032.72 252.8V266.5M1035.11 252.8V266.5M1037.49 252.8V266.5M1039.88 252.8V266.5M1042.26 252.8V266.5M1044.65 252.8V266.5M1047.03 252.8V266.5M1049.42 252.8V266.5M1051.80 252.8V266.5" stroke="#707070" stroke-width="0.8" fill="none" /><rect x="1049.5" y="306.4" width="22.8" height="3.6" rx="0" stroke="#707070" stroke-width="0.8" fill="none" /><path d="M982.6 293.0L997.5 286.4L997.5 316.6L982.6 310.3Z" stroke="#707070" stroke-width="1.0" fill="none" /><path d="M980.2 297.7L986.5 296.5L986.5 308.0L980.2 307.1Z" stroke="#707070" stroke-width="1.0" fill="none" /><circle cx="991.5" cy="302.4" r="4" stroke="#707070" stroke-width="1.0" fill="none"/><rect x="1002.2" y="320.2" width="70.1" height="29.4" rx="0" stroke="#707070" stroke-width="0.9" fill="none" /><rect x="1005.4" y="327.3" width="48.0" height="19.2" rx="0" stroke="#707070" stroke-width="0.9" fill="none" /><path d="M1018 331.6H1052.6" stroke="#707070" stroke-width="1.6" fill="none" stroke-dasharray="1.9 0.8"/><path d="M1057.3 331.6H1068.4" stroke="#707070" stroke-width="1.6" fill="none" stroke-dasharray="1.9 0.8"/><path d="M1018 334H1052.6" stroke="#707070" stroke-width="1.6" fill="none" stroke-dasharray="1.9 0.8"/><path d="M1057.3 334H1068.4" stroke="#707070" stroke-width="1.6" fill="none" stroke-dasharray="1.9 0.8"/><path d="M1018 336.4H1052.6" stroke="#707070" stroke-width="1.6" fill="none" stroke-dasharray="1.9 0.8"/><path d="M1057.3 336.4H1068.4" stroke="#707070" stroke-width="1.6" fill="none" stroke-dasharray="1.9 0.8"/><path d="M1018 338.8H1052.6" stroke="#707070" stroke-width="1.6" fill="none" stroke-dasharray="1.9 0.8"/><path d="M1057.3 338.8H1068.4" stroke="#707070" stroke-width="1.6" fill="none" stroke-dasharray="1.9 0.8"/><path d="M1018 341.2H1052.6" stroke="#707070" stroke-width="1.6" fill="none" stroke-dasharray="1.9 0.8"/><path d="M1057.3 341.2H1068.4" stroke="#707070" stroke-width="1.6" fill="none" stroke-dasharray="1.9 0.8"/><path d="M1018 343.6H1052.6" stroke="#707070" stroke-width="1.6" fill="none" stroke-dasharray="1.9 0.8"/><path d="M1057.3 343.6H1068.4" stroke="#707070" stroke-width="1.6" fill="none" stroke-dasharray="1.9 0.8"/><circle cx="1004.6" cy="330" r="13.9" stroke="#707070" stroke-width="0.9" fill="#fff"/><path d="M991.5 302.6L990.4 316.3L1000.6 324.8" stroke="#707070" stroke-width="2.3" fill="none" stroke-linejoin="round"/><path d="M991.5 302.6L990.4 316.3L1000.6 324.8" stroke="#fff" stroke-width="0.7999999999999998" fill="none" stroke-linejoin="round"/><circle cx="1000.7" cy="324.9" r="4.4" stroke="#707070" stroke-width="1.0" fill="none"/><circle cx="1000.7" cy="324.9" r="1.6" stroke="#707070" stroke-width="1.0" fill="none"/><path d="M1210.4 318.3L1243.9 321.5L1238.6 371.2L1205.2 368.0Z" stroke="#707070" stroke-width="1.0" fill="none" /><path d="M1212.0 320.0L1243.6 323.0" stroke="#707070" stroke-width="0.8" fill="none" /><path d="M1211.6 318.6L1206.6 368.0" stroke="#707070" stroke-width="0.8" fill="none" /><path d="M1215.2 357.5L1249.1 360.5L1243.9 410.3L1209.9 406.7Z" stroke="#707070" stroke-width="1.0" fill="none" /><path d="M1216.6 359.2L1248.8 362.2" stroke="#707070" stroke-width="0.8" fill="none" /><path d="M1216.6 357.8L1211.4 406.6" stroke="#707070" stroke-width="0.8" fill="none" /><path d="M1211.4 350.3L1242.8 331.1" stroke="#707070" stroke-width="2.3" fill="none" stroke-linejoin="round"/><path d="M1211.4 350.3L1242.8 331.1" stroke="#fff" stroke-width="0.7999999999999998" fill="none" stroke-linejoin="round"/><path d="M1210.6 349.4L1211.8 351.6L1219 347.2" stroke="#707070" stroke-width="0.8" fill="none" /><path d="M1176.6 428.0L1213.3 425.6L1213.6 427.4L1176.8 430.2Z" stroke="#707070" stroke-width="1.0" fill="none" /><rect x="1181.7" y="435.0" width="50.9" height="66.8" rx="0" stroke="#707070" stroke-width="0.9" fill="#fff" /><rect x="1183.3" y="436.6" width="47.7" height="63.6" rx="0" stroke="#707070" stroke-width="0.8" fill="none" /><path d="M1182 468.2H1232.4M1182 469.8H1232.4" stroke="#707070" stroke-width="0.8" fill="none" /><path d="M1193.4 439.0Q1192.5 440.6 1193.4 442.1Q1194.3 443.7 1193.4 445.2Q1192.5 446.8 1193.4 448.4Q1194.3 449.9 1193.4 451.5Q1192.5 453.1 1193.4 454.6Q1194.3 456.2 1193.4 457.8Q1192.5 459.3 1193.4 460.9Q1194.3 462.4 1193.4 464.0" stroke="#707070" stroke-width="0.7" fill="none" /><path d="M1195.8 439.0Q1194.9 440.6 1195.8 442.1Q1196.7 443.7 1195.8 445.2Q1194.9 446.8 1195.8 448.4Q1196.7 449.9 1195.8 451.5Q1194.9 453.1 1195.8 454.6Q1196.7 456.2 1195.8 457.8Q1194.9 459.3 1195.8 460.9Q1196.7 462.4 1195.8 464.0" stroke="#707070" stroke-width="0.7" fill="none" /><path d="M1198.2 439.0Q1197.3 440.6 1198.2 442.1Q1199.1 443.7 1198.2 445.2Q1197.3 446.8 1198.2 448.4Q1199.1 449.9 1198.2 451.5Q1197.3 453.1 1198.2 454.6Q1199.1 456.2 1198.2 457.8Q1197.3 459.3 1198.2 460.9Q1199.1 462.4 1198.2 464.0" stroke="#707070" stroke-width="0.7" fill="none" /><path d="M1212.6 439.0Q1211.7 440.6 1212.6 442.1Q1213.5 443.7 1212.6 445.2Q1211.7 446.8 1212.6 448.4Q1213.5 449.9 1212.6 451.5Q1211.7 453.1 1212.6 454.6Q1213.5 456.2 1212.6 457.8Q1211.7 459.3 1212.6 460.9Q1213.5 462.4 1212.6 464.0" stroke="#707070" stroke-width="0.7" fill="none" /><path d="M1215.0 439.0Q1214.1 440.6 1215.0 442.1Q1215.9 443.7 1215.0 445.2Q1214.1 446.8 1215.0 448.4Q1215.9 449.9 1215.0 451.5Q1214.1 453.1 1215.0 454.6Q1215.9 456.2 1215.0 457.8Q1214.1 459.3 1215.0 460.9Q1215.9 462.4 1215.0 464.0" stroke="#707070" stroke-width="0.7" fill="none" /><path d="M1217.6 439.0Q1216.7 440.6 1217.6 442.1Q1218.5 443.7 1217.6 445.2Q1216.7 446.8 1217.6 448.4Q1218.5 449.9 1217.6 451.5Q1216.7 453.1 1217.6 454.6Q1218.5 456.2 1217.6 457.8Q1216.7 459.3 1217.6 460.9Q1218.5 462.4 1217.6 464.0" stroke="#707070" stroke-width="0.7" fill="none" /><path d="M1214.0 471.5Q1213.3 473.1 1214.0 474.6Q1214.7 476.2 1214.0 477.8Q1213.3 479.3 1214.0 480.9Q1214.7 482.4 1214.0 484.0Q1213.3 485.6 1214.0 487.1Q1214.7 488.7 1214.0 490.2Q1213.3 491.8 1214.0 493.4Q1214.7 494.9 1214.0 496.5" stroke="#707070" stroke-width="0.7" fill="none" /><path d="M1217.0 471.5Q1216.3 473.1 1217.0 474.6Q1217.7 476.2 1217.0 477.8Q1216.3 479.3 1217.0 480.9Q1217.7 482.4 1217.0 484.0Q1216.3 485.6 1217.0 487.1Q1217.7 488.7 1217.0 490.2Q1216.3 491.8 1217.0 493.4Q1217.7 494.9 1217.0 496.5" stroke="#707070" stroke-width="0.7" fill="none" /><path d="M1220.0 471.5Q1219.3 473.1 1220.0 474.6Q1220.7 476.2 1220.0 477.8Q1219.3 479.3 1220.0 480.9Q1220.7 482.4 1220.0 484.0Q1219.3 485.6 1220.0 487.1Q1220.7 488.7 1220.0 490.2Q1219.3 491.8 1220.0 493.4Q1220.7 494.9 1220.0 496.5" stroke="#707070" stroke-width="0.7" fill="none" /><path d="M1223.0 471.5Q1222.3 473.1 1223.0 474.6Q1223.7 476.2 1223.0 477.8Q1222.3 479.3 1223.0 480.9Q1223.7 482.4 1223.0 484.0Q1222.3 485.6 1223.0 487.1Q1223.7 488.7 1223.0 490.2Q1222.3 491.8 1223.0 493.4Q1223.7 494.9 1223.0 496.5" stroke="#707070" stroke-width="0.7" fill="none" /><path d="M1226.0 471.5Q1225.3 473.1 1226.0 474.6Q1226.7 476.2 1226.0 477.8Q1225.3 479.3 1226.0 480.9Q1226.7 482.4 1226.0 484.0Q1225.3 485.6 1226.0 487.1Q1226.7 488.7 1226.0 490.2Q1225.3 491.8 1226.0 493.4Q1226.7 494.9 1226.0 496.5" stroke="#707070" stroke-width="0.7" fill="none" /><path d="M1228.6 471.5Q1227.9 473.1 1228.6 474.6Q1229.3 476.2 1228.6 477.8Q1227.9 479.3 1228.6 480.9Q1229.3 482.4 1228.6 484.0Q1227.9 485.6 1228.6 487.1Q1229.3 488.7 1228.6 490.2Q1227.9 491.8 1228.6 493.4Q1229.3 494.9 1228.6 496.5" stroke="#707070" stroke-width="0.7" fill="none" /><path d="M1209.2 591.0L1239.3 591.0L1233.6 606.0L1214.0 606.0Z" stroke="#707070" stroke-width="1.0" fill="none" /><path d="M1217.3 602.6L1227.9 602.6L1226.5 608.3L1218.7 608.3Z" stroke="#707070" stroke-width="1.0" fill="none" /><circle cx="1222.8" cy="596.9" r="4" stroke="#707070" stroke-width="1.0" fill="none"/><circle cx="1195.3" cy="530.3" r="14.2" stroke="#707070" stroke-width="1.0" fill="none"/><path d="M1200.4 534.5L1228.5 544.6L1222.6 596.5" stroke="#707070" stroke-width="2.3" fill="none" stroke-linejoin="round"/><path d="M1200.4 534.5L1228.5 544.6L1222.6 596.5" stroke="#fff" stroke-width="0.7999999999999998" fill="none" stroke-linejoin="round"/><circle cx="1200.2" cy="534.4" r="3.8" stroke="#707070" stroke-width="1.0" fill="none"/><circle cx="1200.2" cy="534.4" r="1.5" stroke="#707070" stroke-width="1.0" fill="none"/><path d="M1065.8 436.6A3.6 3.6 0 1 0 1060.4 434.8C1055 441 1052 450 1052 459L1052 486.5C1052 496 1055 505 1060.4 510.8A3.6 3.6 0 1 0 1065.8 509C1062.5 505 1061.5 500 1062.5 496C1063 492 1063.8 488 1063.6 485.5L1063.6 460C1063.8 457 1063 453 1062.5 449.5C1061.5 445.5 1062.5 440.5 1065.8 436.6Z" stroke="#151515" stroke-width="1.15" fill="none" /><path d="M1063.6 464.8H1073.4M1063.6 481.5H1073.4" stroke="#151515" stroke-width="1.15" fill="none" /><rect x="1073.4" y="431.0" width="83.5" height="83.4" rx="17" stroke="#151515" stroke-width="1.15" fill="none" /><path d="M1091 435.6L1133.9 432.2C1146 433 1152.2 441 1152.2 450.9L1152.2 495.7C1152.2 505 1146 513 1134.9 513.6L1092.1 510C1083 508.5 1078.3 503 1078.3 497.7L1078.3 448.9C1078.3 442 1083 437 1091 435.6Z" stroke="#151515" stroke-width="1.15" fill="none" /><rect x="1096.2" y="420.0" width="46.4" height="8.5" rx="4.25" stroke="#151515" stroke-width="1.15" fill="none" /><rect x="1096.2" y="517.1" width="46.4" height="8.7" rx="4.35" stroke="#151515" stroke-width="1.15" fill="none" /><path d="M652.5 801.8V724.6Q652.5 719.6 657.5 719.6H819.8Q824.8 719.6 824.8 724.6V955.3Q824.8 960.3 819.8 960.3H657.5Q652.5 960.3 652.5 955.3V941.5" stroke="#151515" stroke-width="1.2" fill="none" /><path d="M652.5 801.8Q652.5 806.3 657.5 806.3M652.5 941.5Q652.5 937 657.5 937" stroke="#151515" stroke-width="1.2" fill="none" /><rect x="652.5" y="806.3" width="59.7" height="130.7" rx="5" stroke="#151515" stroke-width="1.2" fill="none" /><rect x="663.3" y="744.9" width="46.5" height="36.8" rx="2" stroke="#707070" stroke-width="0.9" fill="none" /><rect x="664.6" y="746.4" width="43.9" height="14.4" rx="2.5" stroke="#707070" stroke-width="0.8" fill="none" /><path d="M672 746.4V749.5H677M696 746.4V749.5H701M672 760.8V757.8H677M696 760.8V757.8H701M664.6 750.5H670M703 750.5H708.5M664.6 757H670M703 757H708.5" stroke="#707070" stroke-width="0.8" fill="none" /><path d="M664.6 761.6H708.5M686.8 761.6V781.7" stroke="#707070" stroke-width="0.8" fill="none" /><path d="M668.4 766.80H680.4M668.4 769.40H680.4M668.4 772.00H680.4M668.4 774.60H680.4" stroke="#707070" stroke-width="0.7" fill="none" /><path d="M670.00 765.5V776M673.00 765.5V776M676.00 765.5V776M679.00 765.5V776" stroke="#707070" stroke-width="0.7" fill="none" /><rect x="668.4" y="777.6" width="5.5" height="2.4" rx="0" stroke="#707070" stroke-width="0.7" fill="none" /><rect x="689.3" y="763.0" width="14.5" height="7.8" rx="0" stroke="#707070" stroke-width="0.8" fill="none" /><rect x="689.3" y="771.6" width="14.5" height="8.2" rx="0" stroke="#707070" stroke-width="0.8" fill="none" /><path d="M691.00 764V770M692.90 764V770M694.80 764V770M696.70 764V770M698.60 764V770M700.50 764V770M702.40 764V770" stroke="#707070" stroke-width="0.9" fill="none" /><path d="M691.00 773V779M692.90 773V779M694.80 773V779M696.70 773V779M698.60 773V779M700.50 773V779M702.40 773V779" stroke="#707070" stroke-width="0.9" fill="none" /><rect x="665.3" y="825.5" width="32.5" height="87.4" rx="0" stroke="#707070" stroke-width="0.9" fill="none" /><path d="M670.8 828.50H689.3M670.8 831.50H689.3M670.8 834.50H689.3M670.8 837.50H689.3M670.8 840.50H689.3M670.8 843.50H689.3M670.8 846.50H689.3M670.8 849.50H689.3M670.8 852.50H689.3M670.8 855.50H689.3M670.8 858.50H689.3M670.8 861.50H689.3M670.8 864.50H689.3M670.8 867.50H689.3M670.8 870.50H689.3M670.8 873.50H689.3M670.8 876.50H689.3M670.8 879.50H689.3M670.8 882.50H689.3M670.8 885.50H689.3M670.8 888.50H689.3M670.8 891.50H689.3" stroke="#707070" stroke-width="0.65" fill="none" /><path d="M672.60 828.5V891.5M675.72 828.5V891.5M678.84 828.5V891.5M681.96 828.5V891.5M685.08 828.5V891.5M688.20 828.5V891.5" stroke="#707070" stroke-width="0.65" fill="none" /><path d="M693 829V889.5" stroke="#707070" stroke-width="0.9" fill="none" stroke-dasharray="4.6 2.4"/><path d="M677.3 895.40H689.8M677.3 898.44H689.8M677.3 901.48H689.8M677.3 904.52H689.8M677.3 907.56H689.8M677.3 910.60H689.8" stroke="#707070" stroke-width="0.65" fill="none" /><path d="M679.50 895.4V910.6M682.33 895.4V910.6M685.17 895.4V910.6M688.00 895.4V910.6" stroke="#707070" stroke-width="0.65" fill="none" /><rect x="678.5" y="918.9" width="13.2" height="8.4" rx="3.2" stroke="#707070" stroke-width="0.9" fill="none" /><path d="M683.6 918.9V927.3M678.5 923H683.6" stroke="#707070" stroke-width="0.8" fill="none" /><path d="M691.7 923C700 923.5 705 916 707.4 902.5C709.5 890 711 876 712.2 864" stroke="#707070" stroke-width="0.8" fill="none" /><path d="M697.8 885.7C705 884 710 876 712.2 866.4" stroke="#707070" stroke-width="0.8" fill="none" /><rect x="722.3" y="824.3" width="4.3" height="91.0" rx="0" stroke="#707070" stroke-width="0.9" fill="none" /><path d="M726.6 824.3H739.6C746 824.3 750 829.5 753.1 833.9L771.2 854.4C775.5 859.5 777.2 864.5 777.2 870C777.2 875.5 775.5 880.5 771.2 885.6L753.1 906.1C750 910.5 746 915.3 739.6 915.3H726.6" stroke="#707070" stroke-width="0.9" fill="none" /><path d="M753.1 833.9H808.5V837.6H813.8V901.4H808.5V905.8H753.1" stroke="#707070" stroke-width="0.9" fill="none" /><path d="M808.5 837.6V901.4M756 837.6H808.5M756 901.4H808.5" stroke="#707070" stroke-width="0.8" fill="none" /><path d="M760.7 841.20H797.6M762.9 843.66H797.6M765.1 846.11H797.6M767.3 848.57H797.6M769.4 851.03H797.6M771.6 853.48H797.6M773.5 855.94H797.6M775.1 858.40H797.6M776.3 860.85H797.6M777.3 863.31H797.6M778.0 865.77H797.6M778.3 868.22H797.6M778.4 870.68H797.6M778.2 873.13H797.6M777.6 875.59H797.6M776.8 878.05H797.6M775.7 880.50H797.6M774.3 882.96H797.6M772.5 885.42H797.6M770.4 887.87H797.6M768.2 890.33H797.6M766.1 892.79H797.6M763.9 895.24H797.6M761.7 897.70H797.6" stroke="#707070" stroke-width="0.7" fill="none" /><path d="M652.5 830.6C647 824 641 820 633.3 820L583.3 820C567 820 557.5 835 557.5 855.6L557.5 890C557.5 909 567 923.6 583.3 923.6L633.3 923.6C641 923.6 647 919.5 652.5 913" stroke="#151515" stroke-width="1.2" fill="none" /><rect x="577.0" y="808.9" width="62.7" height="11.1" rx="5.5" stroke="#151515" stroke-width="1.2" fill="none" /><rect x="577.0" y="923.6" width="62.7" height="11.7" rx="5.8" stroke="#151515" stroke-width="1.2" fill="none" /><path d="M541.5 834.5A4.6 4.6 0 0 1 550.6 838.8C546.5 850 545.3 860 545.3 871.8C545.3 883 546.5 893.5 550.6 904.6A4.6 4.6 0 0 1 541.5 908.8C537.5 897 536.1 885 536.1 871.8C536.1 858 537.5 846.5 541.5 834.5Z" stroke="#151515" stroke-width="1.2" fill="none" /><path d="M545.6 865.8H557.5M545.6 877.2H557.5" stroke="#151515" stroke-width="1.1" fill="none" /><rect x="531.2" y="863.9" width="3.0" height="16.1" rx="0" stroke="#707070" stroke-width="0.9" fill="none" /><rect x="982.8" y="727.0" width="302.8" height="151.6" rx="0" stroke="#151515" stroke-width="1.3" fill="none" /><path d="M988.6 727V878.6M1279.4 727V878.6" stroke="#151515" stroke-width="1.2" fill="none" /><path d="M982.8 802.8H988.6" stroke="#151515" stroke-width="1" fill="none" /><path d="M1028 797.8L1033.4 741Q1033.8 737.4 1037.4 737.4H1106.2Q1109.8 737.4 1110.2 741L1114.2 797.8" stroke="#707070" stroke-width="0.9" fill="none" /><path d="M1023.3 818.6V802Q1023.3 797.8 1027.5 797.8H1115Q1119.2 797.8 1119.2 802V818.6Z" stroke="#707070" stroke-width="0.9" fill="none" /><path d="M1169.2 737H1275.8V814.6Q1275.8 818.6 1271.8 818.6H1173.2Q1169.2 818.6 1169.2 814.6Z" stroke="#707070" stroke-width="0.9" fill="none" /><path d="M1169.6 812.6H1275.6" stroke="#707070" stroke-width="0.8" fill="none" /><rect x="1033.0" y="837.5" width="81.2" height="31.1" rx="1.5" stroke="#707070" stroke-width="0.9" fill="none" /><rect x="1035.4" y="840.4" width="2.6" height="2.6" rx="0" stroke="#707070" stroke-width="0.7" fill="none" /><rect x="1040.2" y="840.4" width="18.6" height="2.6" rx="0" stroke="#707070" stroke-width="0.7" fill="none" /><rect x="1060.8" y="840.4" width="22.8" height="2.6" rx="0" stroke="#707070" stroke-width="0.7" fill="none" /><rect x="1086.4" y="840.4" width="7.2" height="2.6" rx="0" stroke="#707070" stroke-width="0.7" fill="none" /><rect x="1096.2" y="840.4" width="15.4" height="2.6" rx="0" stroke="#707070" stroke-width="0.7" fill="none" /><rect x="1035.4" y="845.4" width="47.4" height="20.6" rx="1" stroke="#707070" stroke-width="0.8" fill="none" /><rect x="1086.6" y="845.6" width="6.4" height="9.6" rx="0" stroke="#707070" stroke-width="0.7" fill="none" /><rect x="1086.0" y="863.6" width="7.6" height="2.6" rx="0" stroke="#707070" stroke-width="0.7" fill="none" /><rect x="1088.4" y="860.6" width="2.8" height="1.6" rx="0" stroke="#707070" stroke-width="0.6" fill="none" /><rect x="1096.2" y="845.4" width="15.4" height="20.6" rx="1" stroke="#707070" stroke-width="0.8" fill="none" /><rect x="1136.4" y="838.0" width="38.0" height="30.6" rx="2.2" stroke="#707070" stroke-width="0.9" fill="none" /><path d="M1049.6 913.6V906Q1049.6 894.4 1061.6 894.4H1133Q1145 894.4 1145 906V913.6" stroke="#151515" stroke-width="1.2" fill="none" /><path d="M1058.6 971.4C1058.6 984 1064 990.3 1072.5 990.3H1121.5C1130 990.3 1135.8 984 1135.8 971.4" stroke="#151515" stroke-width="1.2" fill="none" /><path d="M1058.6 974.4H1052.4Q1048.3 974.4 1048.3 970.4V917.3Q1048.3 913.3 1052.4 913.3H1054.6Q1058.6 913.3 1058.6 917.3Z" stroke="#151515" stroke-width="1.2" fill="none" /><path d="M1135.8 974.4H1142.6Q1146.7 974.4 1146.7 970.4V917.3Q1146.7 913.3 1142.6 913.3H1139.8Q1135.8 913.3 1135.8 917.3Z" stroke="#151515" stroke-width="1.2" fill="none" /><path d="M1069.7 988.5V980.4Q1069.7 976.4 1073.7 976.4H1119.9Q1123.9 976.4 1123.9 980.4V988.5" stroke="#151515" stroke-width="1.2" fill="none" /></svg>
<svg class="i" style="left:0;top:0" width="1920" height="1080" viewBox="0 0 1920 1080"><circle cx="1892" cy="431" r="0.9" fill="#666"/><g transform="translate(1680 165) scale(0.19451)"><defs><linearGradient id="hg" x1="0" y1="0" x2="0" y2="1"><stop offset="0" stop-color="#ffe726"/><stop offset="0.6" stop-color="#ffc41a"/><stop offset="1" stop-color="#f0921a"/></linearGradient><linearGradient id="mg" x1="0" y1="0" x2="1" y2="1"><stop offset="0" stop-color="#f6a818"/><stop offset="0.5" stop-color="#ffd21f"/><stop offset="1" stop-color="#f39a1a"/></linearGradient><linearGradient id="bg" x1="0" y1="0" x2="0" y2="1"><stop offset="0" stop-color="#2b96e6"/><stop offset="1" stop-color="#1673c8"/></linearGradient></defs><path d="M325 250L318 150L350 172C370 120 395 85 418 62L434 100C460 70 490 52 520 44L536 76C552 56 570 42 586 34L604 76C625 82 640 88 654 94L646 124C668 136 682 150 692 164L686 196L714 194L706 252Z" fill="#fff" stroke="#fff" stroke-width="30" stroke-linejoin="round"/><path d="M296 238C360 262 560 262 706 238L702 318C600 345 400 345 304 322L290 290Z" fill="#fff" stroke="#fff" stroke-width="30" stroke-linejoin="round"/><path d="M700 262C730 225 790 220 830 262L856 288C820 268 770 262 705 300Z" fill="#fff" stroke="#fff" stroke-width="30" stroke-linejoin="round"/><path d="M720 280C770 280 810 320 796 384C790 340 760 312 712 308Z" fill="#fff" stroke="#fff" stroke-width="30" stroke-linejoin="round"/><path d="M305 318C286 420 340 532 470 546C600 560 696 470 702 318Z" fill="#fff" stroke="#fff" stroke-width="30" stroke-linejoin="round"/><path d="M690 352C730 340 738 410 700 426Z" fill="#fff" stroke="#fff" stroke-width="30" stroke-linejoin="round"/><path d="M440 560C470 545 560 560 610 585L640 600L590 700L585 835L385 805L400 700Z" fill="#fff" stroke="#fff" stroke-width="30" stroke-linejoin="round"/><path d="M470 560C420 570 330 640 262 690L300 735C350 700 420 660 470 640Z" fill="#fff" stroke="#fff" stroke-width="30" stroke-linejoin="round"/><path d="M600 585C640 600 660 590 676 560L748 556C750 610 720 650 600 705Z" fill="#fff" stroke="#fff" stroke-width="30" stroke-linejoin="round"/><path d="M392 780C340 810 300 850 292 880L286 950L345 965L360 900C400 880 450 870 482 852L500 780Z" fill="#fff" stroke="#fff" stroke-width="30" stroke-linejoin="round"/><path d="M470 790L585 815C600 870 630 910 655 945L598 975C570 930 520 880 474 858Z" fill="#fff" stroke="#fff" stroke-width="30" stroke-linejoin="round"/><path d="M290 950C260 975 230 1000 222 1020C250 1035 330 1010 348 972Z" fill="#fff" stroke="#fff" stroke-width="30" stroke-linejoin="round"/><path d="M600 972L658 945C680 990 700 1030 694 1060C660 1050 630 1010 600 972Z" fill="#fff" stroke="#fff" stroke-width="30" stroke-linejoin="round"/><path d="M40 752L896 418L912 452L56 786Z" fill="#fff" stroke="#fff" stroke-width="30" stroke-linejoin="round"/><path d="M858 284C880 290 900 320 935 330C990 325 1030 360 1030 410C1030 450 1000 470 1002 520C1004 560 1000 580 984 578C968 574 974 540 958 522C940 515 940 500 932 490C905 450 890 400 880 350C872 320 860 300 858 284Z" fill="#fff" stroke="#fff" stroke-width="30" stroke-linejoin="round"/><path d="M205 700C200 670 240 655 270 668C300 680 300 720 270 735C240 745 210 730 205 700Z" fill="#fff" stroke="#fff" stroke-width="30" stroke-linejoin="round"/><path d="M690 505C690 480 730 470 755 490C770 510 760 545 730 548C705 550 690 530 690 505Z" fill="#fff" stroke="#fff" stroke-width="30" stroke-linejoin="round"/><path d="M392 780C340 810 300 850 292 880L286 950L345 965L360 900C400 880 450 870 482 852L500 780Z" fill="url(#bg)" stroke="#0b3f78" stroke-width="6.5" stroke-linejoin="round"/><path d="M470 790L585 815C600 870 630 910 655 945L598 975C570 930 520 880 474 858Z" fill="url(#bg)" stroke="#0b3f78" stroke-width="6.5" stroke-linejoin="round"/><path d="M290 950C260 975 230 1000 222 1020C250 1035 330 1010 348 972Z" fill="#1f86d6" stroke="#0b3f78" stroke-width="6.5" stroke-linejoin="round"/><path d="M600 972L658 945C680 990 700 1030 694 1060C660 1050 630 1010 600 972Z" fill="#1f86d6" stroke="#0b3f78" stroke-width="6.5" stroke-linejoin="round"/><path d="M284 918L350 940L345 966L286 950Z" fill="#5a5a5a" stroke="#222" stroke-width="4" stroke-linejoin="round"/><path d="M590 950L650 925L662 948L600 978Z" fill="#5a5a5a" stroke="#222" stroke-width="4" stroke-linejoin="round"/><path d="M600 585C640 600 660 590 676 560L748 556C750 610 720 650 600 705Z" fill="url(#bg)" stroke="#0b3f78" stroke-width="6.5" stroke-linejoin="round"/><path d="M440 560C470 545 560 560 610 585L640 600L590 700L585 835L385 805L400 700Z" fill="url(#bg)" stroke="#0b3f78" stroke-width="6.5" stroke-linejoin="round"/><path d="M500 600L520 640L488 800" stroke="#6e6e6e" stroke-width="16" fill="none"/><path d="M385 800L585 832" stroke="#6e6e6e" stroke-width="14" fill="none"/><path d="M520 600L545 650L520 810" stroke="#0b3f78" stroke-width="4" fill="none"/><path d="M470 560C420 570 330 640 262 690L300 735C350 700 420 660 470 640Z" fill="url(#bg)" stroke="#0b3f78" stroke-width="6.5" stroke-linejoin="round"/><path d="M40 752L896 418L912 452L56 786Z" fill="#a8672c" stroke="#4a2a0c" stroke-width="6.5" stroke-linejoin="round"/><path d="M48 758L900 426" stroke="#c98a45" stroke-width="8" fill="none"/><path d="M205 700C200 670 240 655 270 668C300 680 300 720 270 735C240 745 210 730 205 700Z" fill="#f9c795" stroke="#4a2508" stroke-width="4" stroke-linejoin="round"/><path d="M690 505C690 480 730 470 755 490C770 510 760 545 730 548C705 550 690 530 690 505Z" fill="#f9c795" stroke="#4a2508" stroke-width="4" stroke-linejoin="round"/><path d="M232 672L240 730M255 668L262 732" stroke="#4a2508" stroke-width="3" fill="none"/><path d="M712 482L716 545M736 482L740 546" stroke="#4a2508" stroke-width="3" fill="none"/><path d="M858 284C880 290 900 320 935 330C990 325 1030 360 1030 410C1030 450 1000 470 1002 520C1004 560 1000 580 984 578C968 574 974 540 958 522C940 515 940 500 932 490C905 450 890 400 880 350C872 320 860 300 858 284Z" fill="url(#mg)" stroke="#7a3f06" stroke-width="6.5" stroke-linejoin="round"/><path d="M900 340C930 380 950 440 960 500" stroke="#e88b12" stroke-width="10" fill="none" stroke-linecap="round"/><path d="M960 360C990 370 1005 400 1000 440" stroke="#ffe76a" stroke-width="12" fill="none" stroke-linecap="round"/><path d="M690 352C730 340 738 410 700 426Z" fill="#f3b27c" stroke="#4a2508" stroke-width="4" stroke-linejoin="round"/><path d="M305 318C286 420 340 532 470 546C600 560 696 470 702 318Z" fill="#f9c795" stroke="#4a2508" stroke-width="6.5" stroke-linejoin="round"/><path d="M664 322H702V395L664 412Z" fill="#f7a21b" stroke="#4a2508" stroke-width="4"/><ellipse cx="405" cy="350" rx="54" ry="33" fill="#fff" stroke="#4a2508" stroke-width="4"/><ellipse cx="566" cy="360" rx="54" ry="33" fill="#fff" stroke="#4a2508" stroke-width="4"/><circle cx="416" cy="350" r="22" fill="#3d8fdc"/><circle cx="558" cy="360" r="22" fill="#3d8fdc"/><circle cx="416" cy="350" r="9" fill="#12355e"/><circle cx="558" cy="360" r="9" fill="#12355e"/><path d="M345 335C380 322 430 325 462 345M508 352C540 335 595 335 625 350" stroke="#2a1505" stroke-width="9" fill="none"/><path d="M455 400C440 425 455 440 480 436" stroke="#4a2508" stroke-width="5" fill="none"/><path d="M408 458C450 490 510 488 556 452" stroke="#4a2508" stroke-width="6" fill="none" stroke-linecap="round"/><circle cx="478" cy="515" r="5" fill="#4a2508"/><path d="M720 280C770 280 810 320 796 384C790 340 760 312 712 308Z" fill="#2b2b2b" stroke="#111" stroke-width="3" stroke-linejoin="round"/><path d="M700 262C730 225 790 220 830 262L856 288C820 268 770 262 705 300Z" fill="#3a3a3a" stroke="#111" stroke-width="3" stroke-linejoin="round"/><path d="M325 250L318 150L350 172C370 120 395 85 418 62L434 100C460 70 490 52 520 44L536 76C552 56 570 42 586 34L604 76C625 82 640 88 654 94L646 124C668 136 682 150 692 164L686 196L714 194L706 252Z" fill="url(#hg)" stroke="#4a2508" stroke-width="6.5" stroke-linejoin="round"/><path d="M390 230C395 170 420 130 440 110C435 160 450 200 470 235ZM500 235C500 170 520 120 545 90C545 150 560 200 590 238ZM610 236C615 190 630 160 650 140C650 180 665 210 690 232Z" fill="#f39a1a" opacity="0.55"/><path d="M296 238C360 262 560 262 706 238L702 318C600 345 400 345 304 322L290 290Z" fill="#555555" stroke="#1d1d1d" stroke-width="6.5" stroke-linejoin="round"/><path d="M300 262C400 290 580 290 702 262" stroke="#6d6d6d" stroke-width="8" fill="none"/></g><g transform="translate(1630 350) scale(0.15104)"><defs><linearGradient id="tg" gradientUnits="userSpaceOnUse" x1="0" y1="60" x2="0" y2="480"><stop offset="0" stop-color="#2aa7ea"/><stop offset="1" stop-color="#1761c2"/></linearGradient></defs><path d="M95 92C102 160 96 240 102 316" stroke="#fff" stroke-width="80" fill="none" stroke-linecap="round" stroke-linejoin="round"/><path d="M95 92C160 66 252 108 276 168C290 214 200 238 140 224" stroke="#fff" stroke-width="80" fill="none" stroke-linecap="round" stroke-linejoin="round"/><path d="M285 205L312 232" stroke="#fff" stroke-width="80" fill="none" stroke-linecap="round" stroke-linejoin="round"/><path d="M325 346L326 347" stroke="#fff" stroke-width="90" fill="none" stroke-linecap="round" stroke-linejoin="round"/><path d="M456 300C420 284 384 300 400 330C416 356 470 360 480 394C486 426 430 432 390 404" stroke="#fff" stroke-width="80" fill="none" stroke-linecap="round" stroke-linejoin="round"/><path d="M560 236C560 300 566 380 580 452" stroke="#fff" stroke-width="80" fill="none" stroke-linecap="round" stroke-linejoin="round"/><path d="M640 342C646 380 656 420 666 462" stroke="#fff" stroke-width="80" fill="none" stroke-linecap="round" stroke-linejoin="round"/><path d="M725 272C730 330 746 400 762 472" stroke="#fff" stroke-width="80" fill="none" stroke-linecap="round" stroke-linejoin="round"/><path d="M842 370C800 386 770 400 762 416C800 430 850 450 882 462" stroke="#fff" stroke-width="80" fill="none" stroke-linecap="round" stroke-linejoin="round"/><path d="M966 426C950 370 936 310 920 256C950 290 980 322 1010 346C1040 310 1070 270 1100 236C1130 310 1160 390 1186 466" stroke="#fff" stroke-width="80" fill="none" stroke-linecap="round" stroke-linejoin="round"/><path d="M1120 306L1192 293" stroke="#fff" stroke-width="80" fill="none" stroke-linecap="round" stroke-linejoin="round"/><path d="M1255 410L1256 411" stroke="#fff" stroke-width="90" fill="none" stroke-linecap="round" stroke-linejoin="round"/><path d="M1312 402C1316 350 1350 330 1366 356C1376 380 1380 404 1392 398C1398 350 1430 326 1448 348C1458 372 1460 392 1476 388C1494 380 1504 356 1526 346" stroke="#fff" stroke-width="80" fill="none" stroke-linecap="round" stroke-linejoin="round"/><path d="M1690 290C1660 262 1600 270 1590 310C1584 352 1640 366 1676 340C1700 322 1700 296 1690 290C1700 320 1730 340 1772 342" stroke="#fff" stroke-width="80" fill="none" stroke-linecap="round" stroke-linejoin="round"/><path d="M1764 226C1770 252 1780 280 1792 302" stroke="#fff" stroke-width="80" fill="none" stroke-linecap="round" stroke-linejoin="round"/><path d="M1770 244C1800 210 1850 180 1886 186" stroke="#fff" stroke-width="80" fill="none" stroke-linecap="round" stroke-linejoin="round"/><path d="M95 92C102 160 96 240 102 316" stroke="url(#tg)" stroke-width="44" fill="none" stroke-linecap="round" stroke-linejoin="round"/><path d="M95 92C160 66 252 108 276 168C290 214 200 238 140 224" stroke="url(#tg)" stroke-width="44" fill="none" stroke-linecap="round" stroke-linejoin="round"/><path d="M285 205L312 232" stroke="url(#tg)" stroke-width="44" fill="none" stroke-linecap="round" stroke-linejoin="round"/><path d="M325 346L326 347" stroke="url(#tg)" stroke-width="54" fill="none" stroke-linecap="round" stroke-linejoin="round"/><path d="M456 300C420 284 384 300 400 330C416 356 470 360 480 394C486 426 430 432 390 404" stroke="url(#tg)" stroke-width="44" fill="none" stroke-linecap="round" stroke-linejoin="round"/><path d="M560 236C560 300 566 380 580 452" stroke="url(#tg)" stroke-width="44" fill="none" stroke-linecap="round" stroke-linejoin="round"/><path d="M640 342C646 380 656 420 666 462" stroke="url(#tg)" stroke-width="44" fill="none" stroke-linecap="round" stroke-linejoin="round"/><path d="M725 272C730 330 746 400 762 472" stroke="url(#tg)" stroke-width="44" fill="none" stroke-linecap="round" stroke-linejoin="round"/><path d="M842 370C800 386 770 400 762 416C800 430 850 450 882 462" stroke="url(#tg)" stroke-width="44" fill="none" stroke-linecap="round" stroke-linejoin="round"/><path d="M966 426C950 370 936 310 920 256C950 290 980 322 1010 346C1040 310 1070 270 1100 236C1130 310 1160 390 1186 466" stroke="url(#tg)" stroke-width="44" fill="none" stroke-linecap="round" stroke-linejoin="round"/><path d="M1120 306L1192 293" stroke="url(#tg)" stroke-width="44" fill="none" stroke-linecap="round" stroke-linejoin="round"/><path d="M1255 410L1256 411" stroke="url(#tg)" stroke-width="54" fill="none" stroke-linecap="round" stroke-linejoin="round"/><path d="M1312 402C1316 350 1350 330 1366 356C1376 380 1380 404 1392 398C1398 350 1430 326 1448 348C1458 372 1460 392 1476 388C1494 380 1504 356 1526 346" stroke="url(#tg)" stroke-width="44" fill="none" stroke-linecap="round" stroke-linejoin="round"/><path d="M1690 290C1660 262 1600 270 1590 310C1584 352 1640 366 1676 340C1700 322 1700 296 1690 290C1700 320 1730 340 1772 342" stroke="url(#tg)" stroke-width="44" fill="none" stroke-linecap="round" stroke-linejoin="round"/><path d="M1764 226C1770 252 1780 280 1792 302" stroke="url(#tg)" stroke-width="44" fill="none" stroke-linecap="round" stroke-linejoin="round"/><path d="M1770 244C1800 210 1850 180 1886 186" stroke="url(#tg)" stroke-width="44" fill="none" stroke-linecap="round" stroke-linejoin="round"/><circle cx="628" cy="293" r="13" fill="#5a5f66"/></g><defs><linearGradient id="dwb" x1="0" y1="0" x2="1" y2="1"><stop offset="0" stop-color="#1d4f8c"/><stop offset="1" stop-color="#153a6e"/></linearGradient><linearGradient id="dwy" x1="0" y1="0" x2="1" y2="1"><stop offset="0" stop-color="#fff7b0"/><stop offset="0.5" stop-color="#f7df4a"/><stop offset="1" stop-color="#ecc82a"/></linearGradient></defs><path d="M94.5 767H152L184 799V884H94.5Z" fill="url(#dwy)"/><path d="M94.5 767H152L184 799V848L120 828H94.5Z" fill="url(#dwb)"/><path d="M152 767C156 782 160 796 184 802V799L152 767Z" fill="#3a6eaa"/><path d="M152 767L184 799L184 804C166 800 158 790 152 767Z" fill="#27579a"/><path d="M119.5 767V828M94.5 805H184" stroke="#fff" stroke-width="1.8" fill="none"/><rect x="110.5" y="795" width="20" height="20" fill="#1d4f8c" stroke="#fff" stroke-width="2"/><rect x="119" y="803.8" width="2.2" height="2.2" fill="#fff"/><text x="117" y="876.5" font-family="Liberation Sans" font-weight="bold" font-size="27.5" fill="#111" textLength="64" lengthAdjust="spacingAndGlyphs">.dwg</text><defs><linearGradient id="dl" x1="0" y1="0" x2="0" y2="1"><stop offset="0" stop-color="#f0222c"/><stop offset="0.5" stop-color="#e31b25"/><stop offset="1" stop-color="#c4161f"/></linearGradient><radialGradient id="dc" cx="40%" cy="35%" r="70%"><stop offset="0" stop-color="#e0202a"/><stop offset="1" stop-color="#8e0c12"/></radialGradient></defs><rect x="19.5" y="903.5" width="232.5" height="83" rx="41.5" fill="#a00f17"/><rect x="19.5" y="903" width="231.5" height="81" rx="40.5" fill="url(#dl)"/><circle cx="210.5" cy="945" r="26" fill="url(#dc)"/><path d="M203.6 926.6H215.6V945H223.6L209.6 964L195.6 945H203.6Z" fill="#fff"/><text x="38.5" y="957.8" font-family="Liberation Sans" font-weight="bold" font-size="31.5" fill="#fff" stroke="#fff" stroke-width="0.7" textLength="136.5" lengthAdjust="spacingAndGlyphs" transform="translate(0 0)">DOWNLOAD</text></svg>
<div class="abs" style="left:0;top:1007px;width:1920px;height:33px;background:#222832"></div>
<div class="abs" style="left:0;top:1007px;width:1920px;height:4px;background:#3a424f"></div>
<div class="abs" style="left:0;top:1040px;width:1920px;height:40px;background:#1e1f1f"></div>
<svg class="i" style="left:98px;top:1011px" width="122" height="24" viewBox="0 0 122 24"><path d="M0 24L10.5 0H121L112 24Z" fill="#363e4b"/></svg>
<svg class="i" style="left:16px;top:1018px" width="16" height="12" viewBox="0 0 16 12" ><path d="M0 1H16M0 6H16M0 11H16" stroke="#e4e7ec" stroke-width="1.6"/></svg>
<span class="t" style="left:58.3px;top:1015.6px;font-size:12px;line-height:16px;color:#e6e8ec;transform:scaleX(1.031);">Model</span>
<span class="t" style="left:116.0px;top:1015.6px;font-size:12px;line-height:16px;color:#ffffff;font-weight:bold;transform:scaleX(0.955);">PislikMimar.com</span>
<svg class="i" style="left:41px;top:1014px" width="9" height="19" viewBox="0 0 9 19" ><path d="M7 1L2 18" stroke="#363d4a" stroke-width="1.2"/></svg>
<svg class="i" style="left:256px;top:1014px" width="9" height="19" viewBox="0 0 9 19" ><path d="M7 1L2 18" stroke="#363d4a" stroke-width="1.2"/></svg>
<svg class="i" style="left:232px;top:1016px" width="15" height="15" viewBox="0 0 15 15" ><path d="M7.5 0.5V14.5M0.5 7.5H14.5" stroke="#e4e7ec" stroke-width="1.8"/></svg>
<div class="abs" style="left:1458px;top:1012.5px;width:462px;height:24.5px;background:#333b48"></div>
<div class="abs" style="left:1502px;top:1014px;width:21.7px;height:21.8px;background:#5b8ccb"></div>
<div class="abs" style="left:1607px;top:1014px;width:22.2px;height:21.8px;background:#5b8ccb"></div>
<div class="abs" style="left:1630.7px;top:1014px;width:22.3px;height:21.8px;background:#5b8ccb"></div>
<div class="abs" style="left:1498.7px;top:1012.5px;width:1.2px;height:24.5px;background:#262c37"></div>
<div class="abs" style="left:1671px;top:1012.5px;width:1.2px;height:24.5px;background:#262c37"></div>
<div class="abs" style="left:1745.5px;top:1012.5px;width:1.2px;height:24.5px;background:#262c37"></div>
<div class="abs" style="left:1788.7px;top:1012.5px;width:1.2px;height:24.5px;background:#262c37"></div>
<div class="abs" style="left:1813.7px;top:1012.5px;width:1.2px;height:24.5px;background:#262c37"></div>
<div class="abs" style="left:1841px;top:1012.5px;width:1.2px;height:24.5px;background:#262c37"></div>
<div class="abs" style="left:1866px;top:1012.5px;width:1.2px;height:24.5px;background:#262c37"></div>
<div class="abs" style="left:1893.7px;top:1012.5px;width:1.2px;height:24.5px;background:#262c37"></div>
<span class="t" style="left:1461.3px;top:1016.5px;font-size:12px;line-height:16px;color:#e6e8ec;transform:scaleX(0.847);">PAPER</span>
<svg class="i" style="left:1553.3px;top:1023.3px" width="6.8" height="3.4" viewBox="0 0 6.8 3.4"><path d="M0 0H6.8L3.4 3.4Z" fill="#e6e8ec"/></svg>
<svg class="i" style="left:1593.6px;top:1023.3px" width="6.8" height="3.4" viewBox="0 0 6.8 3.4"><path d="M0 0H6.8L3.4 3.4Z" fill="#e6e8ec"/></svg>
<svg class="i" style="left:1658.6px;top:1023.3px" width="6.8" height="3.4" viewBox="0 0 6.8 3.4"><path d="M0 0H6.8L3.4 3.4Z" fill="#e6e8ec"/></svg>
<svg class="i" style="left:1776.3px;top:1023.3px" width="6.8" height="3.4" viewBox="0 0 6.8 3.4"><path d="M0 0H6.8L3.4 3.4Z" fill="#e6e8ec"/></svg>
<svg class="i" style="left:0;top:0" width="1920" height="1080" viewBox="0 0 1920 1080"><path d="M1506 1017.8V1031.3H1520" stroke="#e6e8ec" stroke-width="1.4" fill="none" /><path d="M1506 1026.3H1511.5V1031.3" stroke="#e6e8ec" stroke-width="1.1" fill="none" /><circle cx="1535" cy="1025.6" r="5.6" stroke="#e6e8ec" stroke-width="1.2" fill="none"/><path d="M1535 1025.6H1545M1535 1025.6L1542 1018.3" stroke="#e6e8ec" stroke-width="1.2" fill="none" /><path d="M1576.5 1016.8V1031.8" stroke="#5fd08a" stroke-width="1.2" fill="none" /><path d="M1570 1017.8L1583.5 1031.3" stroke="#e2546a" stroke-width="1.2" fill="none" /><circle cx="1576.5" cy="1024.3" r="1.3" fill="#e6e8ec"/><path d="M1610.5 1030.8H1625M1610.5 1030.8L1624.5 1017.8" stroke="#e6e8ec" stroke-width="1.4" fill="none" /><rect x="1615.6" y="1022.4" width="3.4" height="3.4" fill="#e6e8ec"/><path d="M1637 1020.1999999999999H1649.4V1031.8H1637Z" stroke="#e6e8ec" stroke-width="1.4" fill="none" /><rect x="1634.6" y="1017.8" width="4.2" height="4.2" fill="#5b8ccb" stroke="#e6e8ec" stroke-width="1"/><path d="M1677.8 1018.1999999999999H1692.2V1031.3999999999999H1677.8Z" stroke="#e6e8ec" stroke-width="1.3" fill="none" stroke-dasharray="3.2 2.2"/><path d="M1682.6 1023.1999999999999H1689V1029.2H1682.6Z" stroke="#e6e8ec" stroke-width="1.1" fill="none" /><path d="M1677 1017.4L1681.4 1018.4L1678 1021.8Z" fill="#e6e8ec"/><path d="M1707 1018.3L1713.4 1031.8L1707 1027.2L1700.6 1031.8Z" fill="#e6e8ec"/><circle cx="1713.6" cy="1020.4" r="2" stroke="#e6e8ec" stroke-width="1" fill="none"/><path d="M1731 1018.3L1737.4 1031.8L1731 1027.2L1724.6 1031.8Z" fill="#e6e8ec"/><path d="M1738.2 1016.8L1735 1021.1999999999999H1737L1735.4 1025.3999999999999L1740 1019.8H1737.8L1739.4 1016.8Z" fill="#e6e8ec"/><rect x="1757.8" y="1017.4" width="3.4" height="14.8" fill="#e6e8ec" transform="rotate(0 1759.5 1024.8)"/><rect x="1757.8" y="1017.4" width="3.4" height="14.8" fill="#e6e8ec" transform="rotate(45 1759.5 1024.8)"/><rect x="1757.8" y="1017.4" width="3.4" height="14.8" fill="#e6e8ec" transform="rotate(90 1759.5 1024.8)"/><rect x="1757.8" y="1017.4" width="3.4" height="14.8" fill="#e6e8ec" transform="rotate(135 1759.5 1024.8)"/><circle cx="1759.5" cy="1024.8" r="5.4" fill="#e6e8ec"/><circle cx="1759.5" cy="1024.8" r="2.2" fill="#333b48"/><path d="M1801 1016.8V1032.8M1793 1024.8H1809" stroke="#e6e8ec" stroke-width="1.6" fill="none" /><path d="M1821 1017.8H1826.6V1023.4H1821Z" stroke="#e6e8ec" stroke-width="1.1" fill="none" /><circle cx="1833" cy="1023.8" r="2.8" stroke="#e6e8ec" stroke-width="1.1" fill="none"/><path d="M1826.6 1026.3999999999999L1830.4 1032.2H1822.8Z" stroke="#e6e8ec" stroke-width="1.1" fill="none" /><path d="M1850.5 1016.8V1025.8M1846 1020.1999999999999H1857.5" stroke="#67b7ef" stroke-width="1.3" fill="none" /><rect x="1848.8" y="1018.5" width="3.4" height="3.4" fill="#67b7ef"/><rect x="1846.2" y="1025.2" width="7.4" height="6.4" fill="#f0b64a"/><path d="M1853.4 1028.0L1856 1030.8L1861 1024.2" stroke="#58c56c" stroke-width="1.9" fill="none" /><path d="M1872.6 1018.4H1887.4V1031.2H1872.6Z" stroke="#e6e8ec" stroke-width="1.3" fill="none" /><path d="M1881.4 1023.1999999999999L1885 1020.4M1878.6 1026.3999999999999L1875 1029.2" stroke="#e6e8ec" stroke-width="1.1" fill="none" /><path d="M1885.8 1019.8L1885.4 1022.8L1882.8 1020.0ZM1874.2 1029.8L1874.6 1026.8L1877.2 1029.6Z" fill="#e6e8ec"/><path d="M1898.5 1018.8H1913.5M1898.5 1024.8H1913.5M1898.5 1030.8H1913.5" stroke="#e6e8ec" stroke-width="1.7" fill="none" /></svg>
<svg class="i" style="left:16px;top:1052.5px" width="16" height="16" viewBox="0 0 16 16" ><path d="M0 2.3L6.6 1.4V7.6H0ZM7.5 1.3L16 0V7.6H7.5ZM0 8.5H6.6V14.7L0 13.8ZM7.5 8.5H16V16L7.5 14.8Z" fill="#fff"/></svg>
<div class="abs" style="left:48px;top:1040px;width:288px;height:40px;background:#f2f2f2;border-top:1px solid #fff;box-sizing:border-box"></div>
<svg class="i" style="left:59px;top:1051px" width="18" height="18" viewBox="0 0 18 18" ><circle cx="11" cy="6.8" r="5.3" stroke="#1a1a1a" stroke-width="1.5" fill="none"/><path d="M7.2 10.6L1 17" stroke="#1a1a1a" stroke-width="1.6"/></svg>
<span class="t" style="left:89.0px;top:1051.2px;font-size:15px;line-height:19px;color:#2b2b2b;transform:scaleX(0.908);">Ara</span>
<svg class="i" style="left:0;top:0" width="1920" height="1080" viewBox="0 0 1920 1080"><g transform="translate(250 1038) scale(0.15106)">
<defs><linearGradient id="sky" x1="0" y1="0" x2="1" y2="0"><stop offset="0" stop-color="#f4e6cc"/><stop offset="0.45" stop-color="#e6ecdf"/><stop offset="1" stop-color="#c9e2ee"/></linearGradient>
<clipPath id="bc"><rect x="0" y="14" width="570" height="264"/></clipPath></defs>
<g clip-path="url(#bc)">
<ellipse cx="312" cy="160" rx="250" ry="145" fill="url(#sky)"/>
<path d="M100 250C150 190 260 175 330 185C400 180 450 200 480 245L500 278H90Z" fill="#f3df8f"/>
<path d="M95 232C100 170 120 110 150 88C175 95 205 105 232 118C225 150 215 175 200 190C170 180 140 200 120 240Z" fill="#9a8266"/>
<path d="M150 88C160 130 165 170 160 200M150 88C185 120 200 150 200 190" stroke="#5a4a3a" stroke-width="5" fill="none"/>
<path d="M318 30C350 28 400 45 425 70C440 110 445 160 440 200C420 185 395 175 370 180C360 140 340 100 318 30Z" fill="#7d6e5c"/>
<path d="M318 30C345 80 360 130 372 180M330 34C385 70 410 120 425 190" stroke="#4a3e32" stroke-width="5" fill="none"/>
<path d="M330 80C350 60 385 75 392 105C420 130 440 170 455 215C420 235 370 225 330 200C295 185 270 160 262 135C275 100 300 90 330 80Z" fill="#6e6862"/>
<circle cx="245" cy="120" r="36" fill="#b9b1a6"/>
<path d="M212 100L205 70L232 88ZM258 86L275 62L280 96Z" fill="#8a8076"/>
<circle cx="232" cy="118" r="9" fill="#2a2520"/><circle cx="235" cy="115" r="3" fill="#fff"/>
<path d="M205 135C220 150 250 155 270 140" stroke="#4a3e32" stroke-width="4" fill="none"/>
<path d="M270 135C290 120 310 125 315 150C310 175 290 185 275 175C265 165 262 150 270 135Z" fill="#d9a54e"/>
<path d="M300 180C320 170 345 180 345 205C335 225 305 225 295 205Z" fill="#caa56e"/>
<path d="M60 278C70 250 100 240 120 252C135 235 165 235 180 250C200 232 235 235 248 252C270 236 300 238 315 254C335 238 370 240 385 256C405 240 440 242 452 258C475 245 510 250 525 278Z" fill="#6aa53a"/>
<path d="M90 278C110 262 135 262 150 272C175 258 205 260 220 272C245 258 280 260 295 272C320 260 350 262 365 274C390 262 420 264 440 278Z" fill="#8cc152"/>
</g></g></svg>
<svg class="i" style="left:350px;top:1047.5px" width="25" height="25" viewBox="-12.5 -12.5 25 25">
<path d="M0 0L-10.6 -6.1A12.2 12.2 0 0 1 10.6 -6.1Z" fill="#e8453c"/>
<path d="M0 0L10.6 -6.1A12.2 12.2 0 0 1 0 12.2Z" fill="#f9bb2d"/>
<path d="M0 0L0 12.2A12.2 12.2 0 0 1 -10.6 -6.1Z" fill="#2da94f"/>
<path d="M0 -6.1H10.6A12.2 12.2 0 0 0 -10.6 -6.1Z" fill="#e8453c"/>
<circle r="5.7" fill="#fff"/><circle r="4.5" fill="#4285f4"/></svg>
<svg class="i" style="left:398px;top:1046px" width="27" height="28" viewBox="0 0 27 28">
<path d="M12 6C4 6 0.5 11.5 0.5 16.5C0.5 22 5 26 11 26C14 26 14.5 24 13.5 22.5C12.5 21 13.5 19.5 15.5 19.5H19C23 19.5 25 17 25 14C25 9 19.5 6 12 6Z" fill="#e6eef5" stroke="#9fb4c8" stroke-width="0.8"/>
<circle cx="6" cy="13" r="2.1" fill="#e8453c"/><circle cx="11" cy="10" r="2.1" fill="#f9bb2d"/><circle cx="17" cy="10.5" r="2.1" fill="#2da94f"/><circle cx="5.8" cy="18.6" r="2.1" fill="#4285f4"/><circle cx="9.8" cy="22.4" r="1.9" fill="#a05bd6"/>
<path d="M24.5 0.5L26.5 2L16.5 17L14.2 18.6L14.6 15.8Z" fill="#c9935a"/><path d="M24.5 0.5L26.5 2L23.8 6L21.8 4.6Z" fill="#58b2e8"/>
</svg>
<div class="abs" style="left:436.6px;top:1040px;width:45px;height:40px;background:#3c3c3d"></div>
<svg class="i" style="left:450px;top:1048px" width="23" height="24" viewBox="0 0 23 24">
<path d="M1 2.5Q1 0.5 3 0.5H20Q22 0.5 22 2.5V20L19.5 23.5H3L1 21Z" fill="#a50d36"/>
<path d="M1 2.5Q1 0.5 3 0.5H20Q22 0.5 22 2.5V14.5Q22 16.5 20 16.5H3Q1 16.5 1 14.5Z" fill="#e2134f"/>
<text x="11.5" y="13.4" font-family="Liberation Sans" font-weight="bold" font-size="13.5" fill="#fff" text-anchor="middle">A</text>
<text x="11.5" y="22" font-family="Liberation Sans" font-weight="bold" font-size="4.6" fill="#fff" text-anchor="middle">CAD</text></svg>
<svg class="i" style="left:497px;top:1047.5px" width="25" height="25" viewBox="-12.5 -12.5 25 25">
<defs><linearGradient id="op" x1="0" y1="0" x2="0" y2="1"><stop offset="0" stop-color="#ff2b44"/><stop offset="1" stop-color="#c10a1c"/></linearGradient></defs>
<circle r="11.8" fill="url(#op)"/><ellipse rx="5" ry="8.6" fill="#1e1f1f"/></svg>
<div class="abs" style="left:342.7px;top:1077.4px;width:39.3px;height:2.6px;background:#76b9ed"></div>
<div class="abs" style="left:392.3px;top:1077.4px;width:39.4px;height:2.6px;background:#76b9ed"></div>
<div class="abs" style="left:436.6px;top:1077.4px;width:47.6px;height:2.6px;background:#76b9ed"></div>
<div class="abs" style="left:490px;top:1077.4px;width:39.4px;height:2.6px;background:#76b9ed"></div>
<svg class="i" style="left:1758px;top:1055px" width="14" height="9" viewBox="0 0 14 9" ><path d="M1 8L7 2L13 8" stroke="#fff" stroke-width="1.5" fill="none"/></svg>
<svg class="i" style="left:1781px;top:1052px" width="18" height="16" viewBox="0 0 18 16" ><path d="M1 5.5H4L8 2V14L4 10.5H1Z" stroke="#fff" stroke-width="1.2" fill="none" stroke-linejoin="round"/><path d="M10.5 5.5Q12 8 10.5 10.5" stroke="#fff" stroke-width="1.1" fill="none"/><path d="M12.6 3.6Q15.2 8 12.6 12.4" stroke="#9a9a9a" stroke-width="1" fill="none"/><path d="M14.8 2Q18 8 14.8 14" stroke="#6a6a6a" stroke-width="1" fill="none"/></svg>
<span class="t" style="left:1820.0px;top:1042.7px;font-size:12px;line-height:16px;color:#fff;transform:scaleX(0.899);">04:08</span>
<span class="t" style="left:1808.0px;top:1060.7px;font-size:12px;line-height:16px;color:#fff;transform:scaleX(0.886);">17.04.2026</span>
<svg class="i" style="left:1878.5px;top:1051.5px" width="17" height="17" viewBox="0 0 17 17" ><path d="M1 1H16V12.5H10.5L8.5 15.5L6.5 12.5H1Z" stroke="#fff" stroke-width="1.2" fill="none" stroke-linejoin="round"/></svg>
<div class="abs" style="left:1915px;top:1040px;width:1px;height:40px;background:#5a5a5a"></div>
</body></html>
